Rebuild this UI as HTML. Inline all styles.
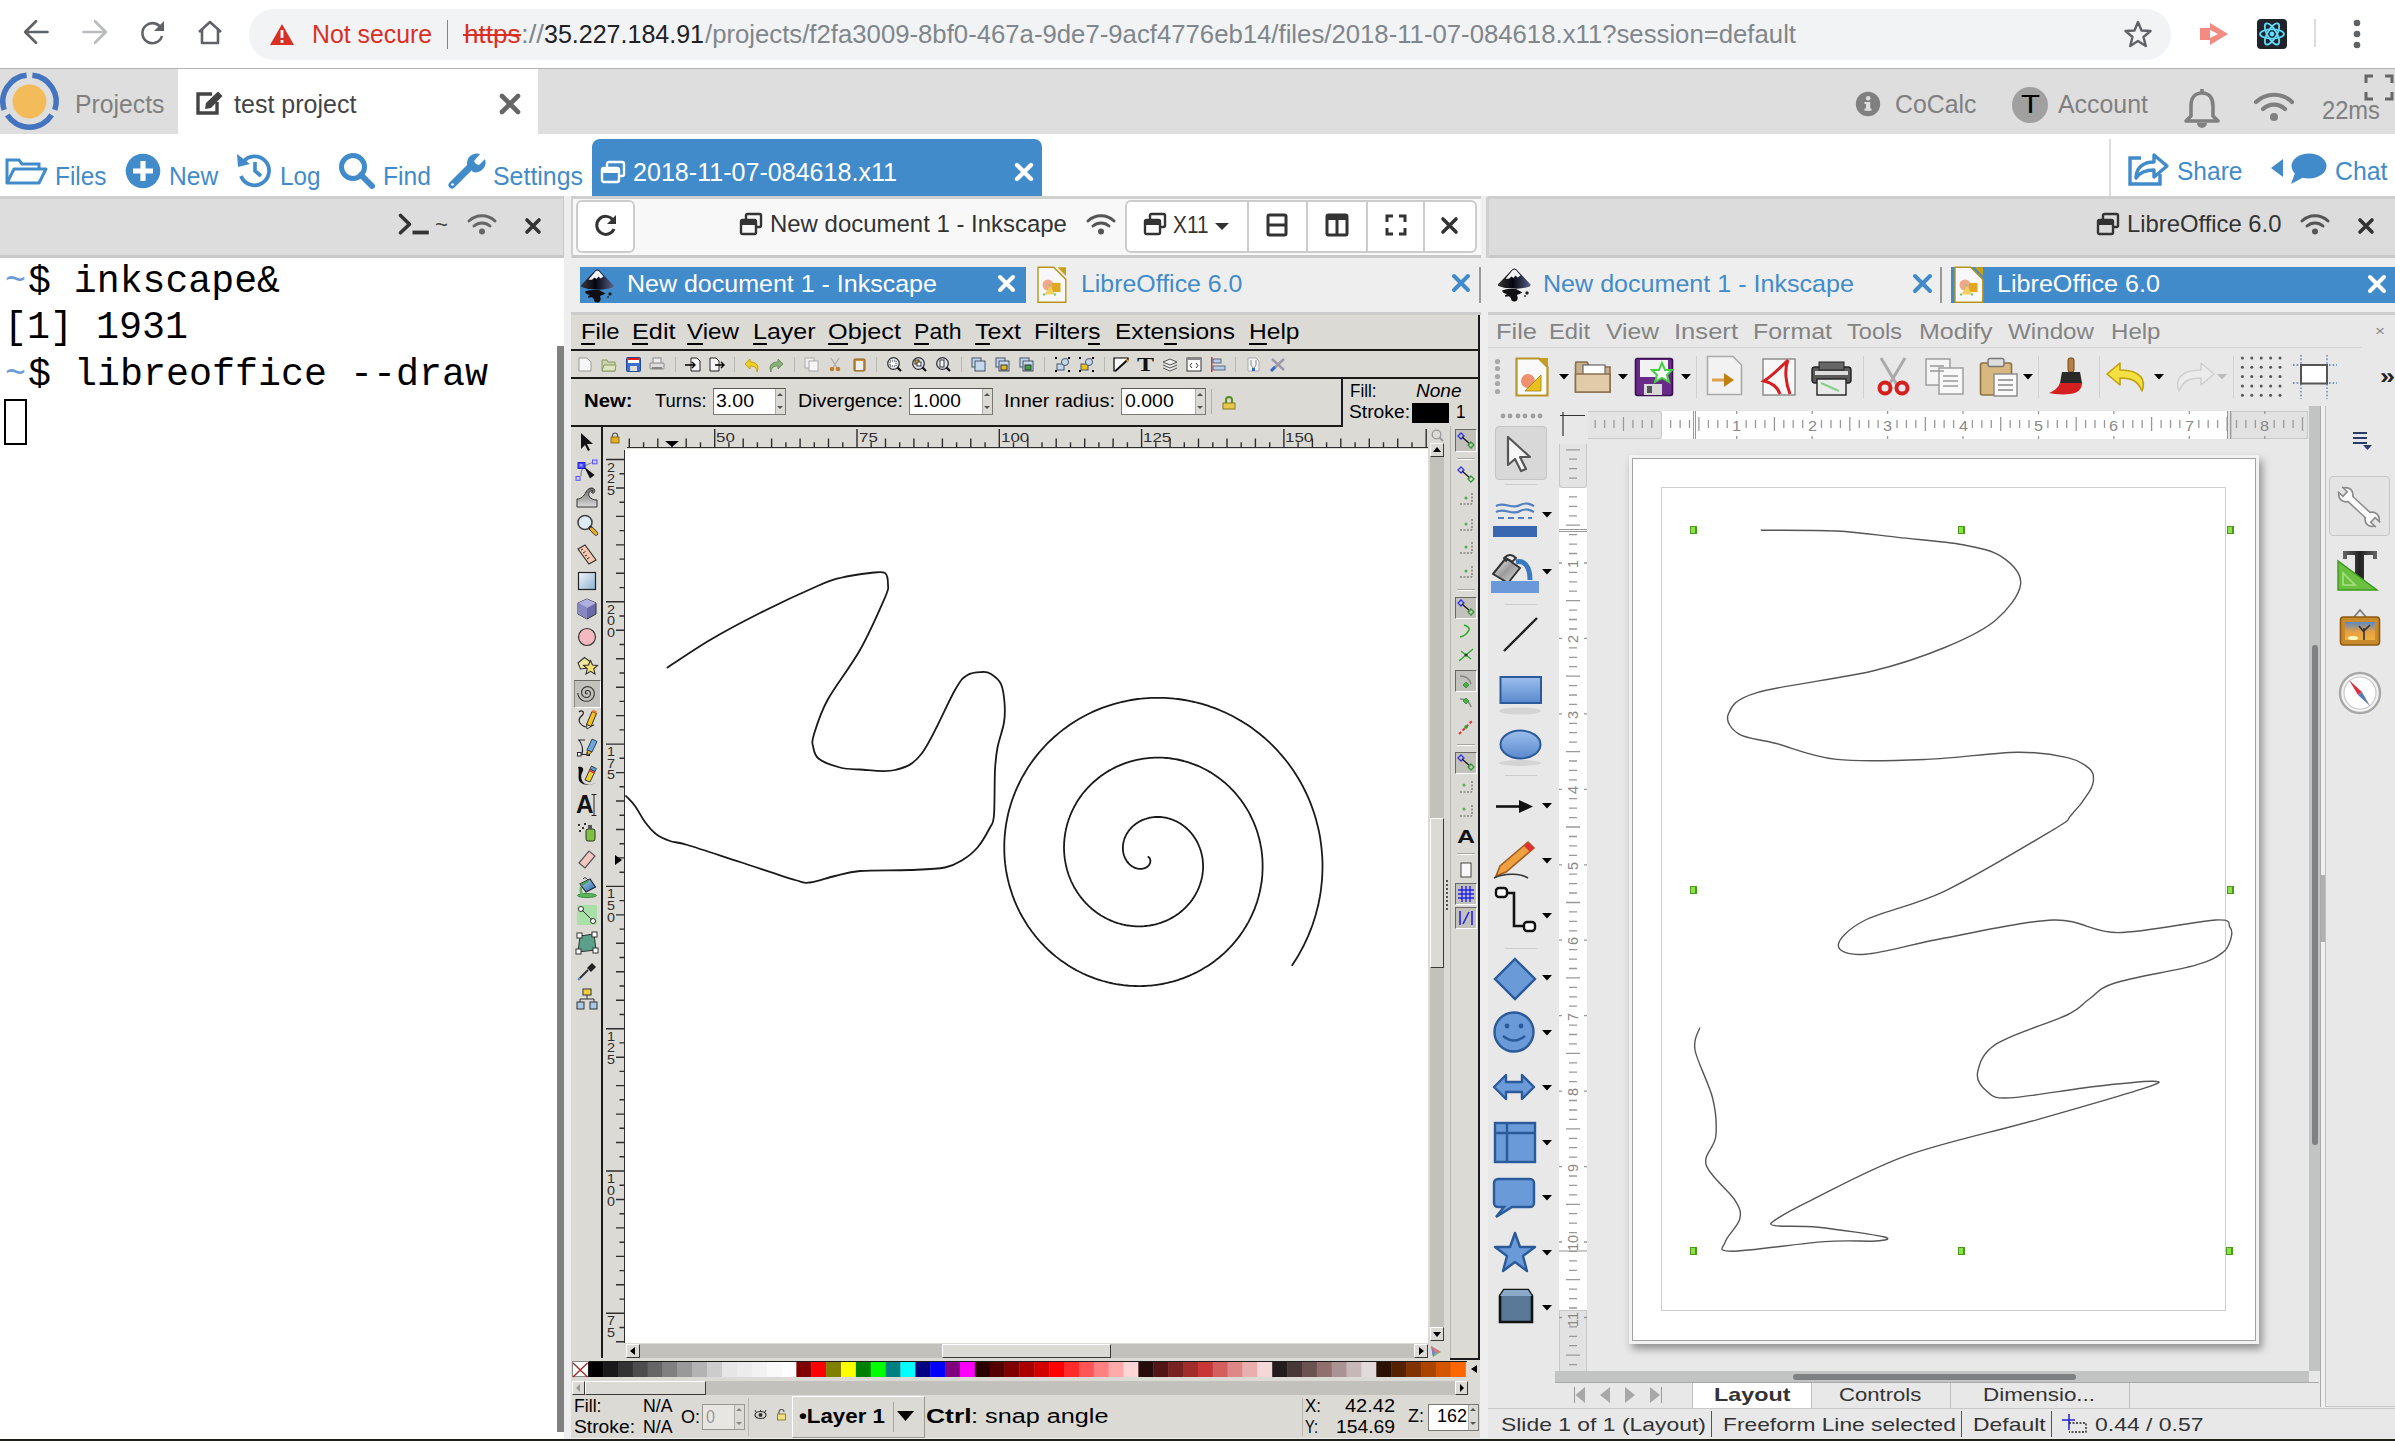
<!DOCTYPE html>
<html><head><meta charset="utf-8">
<style>
html,body{margin:0;padding:0;}
body{width:2395px;height:1441px;position:relative;overflow:hidden;background:#fff;font-family:"Liberation Sans",sans-serif;}
.a{position:absolute;box-sizing:border-box;}
.t{position:absolute;white-space:nowrap;line-height:1;}
svg.a{overflow:visible;}
</style></head><body>
<div class="a" style="left:0px;top:0px;width:2395px;height:68px;background:#fff;"></div>
<div class="a" style="left:0px;top:68px;width:2395px;height:1px;background:#b4b4b4;"></div>
<svg class="a" style="left:24px;top:20px;" width="26" height="26" viewBox="0 0 26 26"><path d="M23.5 12H1.5M12 1.2L1.2 12L12 22.8" fill="none" stroke="#5f6368" stroke-width="2.7" stroke-linecap="round" stroke-linejoin="round"/></svg>
<svg class="a" style="left:82px;top:20px;" width="26" height="26" viewBox="0 0 26 26"><path d="M1.5 12H23.5M13 1.2L23.8 12L13 22.8" fill="none" stroke="#b9bcbf" stroke-width="2.7" stroke-linecap="round" stroke-linejoin="round"/></svg>
<svg class="a" style="left:139px;top:20px;" width="28" height="26" viewBox="0 0 28 26"><path d="M22.5 9A10 10 0 1 0 23 16" fill="none" stroke="#5f6368" stroke-width="2.6"/><path d="M25 1V11H15Z" fill="#5f6368"/></svg>
<svg class="a" style="left:196px;top:20px;" width="28" height="26" viewBox="0 0 28 26"><path d="M3 12L14 2L25 12M6 10V23H22V10" fill="none" stroke="#5f6368" stroke-width="2.6" stroke-linejoin="round"/></svg>
<div class="a" style="left:249px;top:9px;width:1922px;height:51px;background:#f1f3f4;border-radius:25px;"></div>
<svg class="a" style="left:270px;top:24px;" width="24" height="21" viewBox="0 0 24 21"><path d="M12 0L24 21H0Z" fill="#d93025"/><rect x="10.6" y="6" width="2.8" height="8" fill="#fff"/><rect x="10.6" y="16" width="2.8" height="2.8" fill="#fff"/></svg>
<div class="t" style="left:312.0px;top:21.91px;font-size:25.50px;color:#d93025;transform:scaleX(0.9732);transform-origin:0 0;">Not secure</div>
<div class="a" style="left:446.5px;top:20px;width:1px;height:29px;background:#80868b;"></div>
<div class="t" style="left:464.0px;top:21.91px;font-size:25.50px;color:#d93025;transform:scaleX(1.0220);transform-origin:0 0;">https</div>
<div class="a" style="left:463px;top:34px;width:58px;height:2px;background:#d93025;"></div>
<div class="t" style="left:520.5px;top:21.91px;font-size:25.50px;color:#80868b;transform:scaleX(1.0822);transform-origin:0 0;">://</div>
<div class="t" style="left:544.0px;top:21.91px;font-size:25.50px;color:#202124;transform:scaleX(0.9811);transform-origin:0 0;">35.227.184.91</div>
<div class="t" style="left:705.0px;top:21.91px;font-size:25.50px;color:#80868b;transform:scaleX(1.0088);transform-origin:0 0;">/projects/f2fa3009-8bf0-467a-9de7-9acf4776eb14/files/2018-11-07-084618.x11?session=default</div>
<svg class="a" style="left:2124px;top:20px;" width="28" height="28" viewBox="0 0 28 28"><path d="M14 2L17.5 10.5L26.5 11L19.5 17L21.8 26L14 21L6.2 26L8.5 17L1.5 11L10.5 10.5Z" fill="none" stroke="#5f6368" stroke-width="2.4" stroke-linejoin="round"/></svg>
<svg class="a" style="left:2198px;top:20px;" width="32" height="28" viewBox="0 0 32 28"><path d="M2 8H12V3L30 14L12 25V20H2Z" fill="#f28b82"/><path d="M12 10L20 14L12 18Z" fill="#fff"/></svg>
<div class="a" style="left:2257px;top:19px;width:30px;height:30px;background:#20232a;border-radius:4px;"></div>
<svg class="a" style="left:2257px;top:19px;" width="30" height="30" viewBox="0 0 30 30"><g fill="none" stroke="#61dafb" stroke-width="1.8"><ellipse cx="15" cy="15" rx="12" ry="4.6"/><ellipse cx="15" cy="15" rx="12" ry="4.6" transform="rotate(60 15 15)"/><ellipse cx="15" cy="15" rx="12" ry="4.6" transform="rotate(120 15 15)"/></g><circle cx="15" cy="15" r="2.4" fill="#61dafb"/></svg>
<div class="a" style="left:2314px;top:19px;width:2px;height:28px;background:#dadce0;"></div>
<svg class="a" style="left:2350px;top:19px;" width="14" height="32" viewBox="0 0 14 32"><circle cx="7" cy="4" r="3.3" fill="#5f6368"/><circle cx="7" cy="15" r="3.3" fill="#5f6368"/><circle cx="7" cy="26" r="3.3" fill="#5f6368"/></svg>
<div class="a" style="left:0px;top:69px;width:2395px;height:65px;background:#dedede;"></div>
<div class="a" style="left:178px;top:69px;width:360px;height:65px;background:#fff;"></div>
<svg class="a" style="left:0px;top:72px;" width="60" height="60" viewBox="0 0 60 60"><circle cx="29.5" cy="29.5" r="17" fill="#f4bb5a"/><g fill="none" stroke="#4474c0" stroke-width="5.5"><path d="M26.6 3.2A26.5 26.5 0 0 0 4.2 37.9"/><path d="M32.4 3.2A26.5 26.5 0 0 1 54.8 37.9"/><path d="M7.3 43.1A26.5 26.5 0 0 0 51.7 43.1"/></g></svg>
<div class="t" style="left:75.0px;top:91.84px;font-size:25.70px;color:#808080;transform:scaleX(0.9640);transform-origin:0 0;">Projects</div>
<svg class="a" style="left:195px;top:90px;" width="30" height="26" viewBox="0 0 30 26"><path d="M17 4H3V23H22V12" fill="none" stroke="#444" stroke-width="3.4"/><path d="M10 19L11 13L23 1.5L27.5 6L16 18Z" fill="#444"/></svg>
<div class="t" style="left:234.0px;top:91.84px;font-size:25.70px;color:#444;transform:scaleX(0.9745);transform-origin:0 0;">test project</div>
<svg class="a" style="left:499px;top:94px;" width="22" height="20" viewBox="0 0 22 20"><path d="M3 2L19 18M19 2L3 18" stroke="#666" stroke-width="4.6" stroke-linecap="round"/></svg>
<svg class="a" style="left:1855px;top:91px;" width="26" height="26" viewBox="0 0 26 26"><circle cx="13" cy="13" r="12.2" fill="#808080"/><rect x="11" y="11" width="4.2" height="8.5" fill="#dedede"/><rect x="9.5" y="17.5" width="7" height="2.2" fill="#dedede"/><rect x="9.5" y="11" width="3" height="2" fill="#dedede"/><circle cx="13.2" cy="7.2" r="2.3" fill="#dedede"/></svg>
<div class="t" style="left:1894.5px;top:91.74px;font-size:25.70px;color:#808080;transform:scaleX(0.9672);transform-origin:0 0;">CoCalc</div>
<svg class="a" style="left:2012px;top:87px;" width="36" height="36" viewBox="0 0 36 36"><circle cx="18" cy="18" r="18" fill="#a0a0a0"/></svg>
<div class="t" style="left:2020.5px;top:92.34px;font-size:25.00px;color:#000;transform:scaleX(1.2441);transform-origin:0 0;">T</div>
<div class="t" style="left:2058.0px;top:91.74px;font-size:25.70px;color:#808080;transform:scaleX(0.9692);transform-origin:0 0;">Account</div>
<svg class="a" style="left:2182px;top:86px;" width="40" height="43" viewBox="0 0 40 43"><path d="M20 3V7M20 7C12 7 9 13 9 20V30L4 35H36L31 30V20C31 13 28 7 20 7Z" fill="none" stroke="#808080" stroke-width="3.6" stroke-linejoin="round"/><path d="M15 37A5 5 0 0 0 25 37Z" fill="#808080"/></svg>
<svg class="a" style="left:2253px;top:92px;" width="42" height="30" viewBox="0 0 42 30"><path d="M3 10A26 26 0 0 1 39 10M10 17A16 16 0 0 1 32 17" fill="none" stroke="#808080" stroke-width="4.2" stroke-linecap="round"/><circle cx="21" cy="25" r="4" fill="#808080"/></svg>
<div class="t" style="left:2322.0px;top:98.17px;font-size:25.20px;color:#808080;transform:scaleX(0.9412);transform-origin:0 0;">22ms</div>
<svg class="a" style="left:2364px;top:74px;" width="30" height="27" viewBox="0 0 30 27"><path d="M2 9V2H9M21 2H28V9M28 18V25H21M9 25H2V18" fill="none" stroke="#666" stroke-width="3"/></svg>
<div class="a" style="left:0px;top:134px;width:2395px;height:62px;background:#fff;"></div>
<svg class="a" style="left:5px;top:156px;" width="42" height="29" viewBox="0 0 42 29"><path d="M2 27V4H14L17 8H34V12" fill="none" stroke="#428bca" stroke-width="3"/><path d="M2 27L9 13H41L34 27Z" fill="none" stroke="#428bca" stroke-width="3" stroke-linejoin="round"/></svg>
<div class="t" style="left:54.5px;top:163.98px;font-size:25.30px;color:#428bca;transform:scaleX(0.9641);transform-origin:0 0;">Files</div>
<svg class="a" style="left:125px;top:153px;" width="36" height="36" viewBox="0 0 36 36"><circle cx="18" cy="18" r="17.3" fill="#428bca"/><path d="M18 8V28M8 18H28" stroke="#fff" stroke-width="5.2"/></svg>
<div class="t" style="left:168.7px;top:163.98px;font-size:25.30px;color:#428bca;transform:scaleX(0.9740);transform-origin:0 0;">New</div>
<svg class="a" style="left:235px;top:152px;" width="38" height="37" viewBox="0 0 38 37"><path d="M8 10A14.5 14.5 0 1 1 6 24" fill="none" stroke="#428bca" stroke-width="3.8"/><path d="M2 2L3 15L15 12Z" fill="#428bca"/><path d="M20 10V19L26 24" fill="none" stroke="#428bca" stroke-width="3.6"/></svg>
<div class="t" style="left:280.0px;top:163.98px;font-size:25.30px;color:#428bca;transform:scaleX(0.9594);transform-origin:0 0;">Log</div>
<svg class="a" style="left:338px;top:152px;" width="38" height="38" viewBox="0 0 38 38"><circle cx="15" cy="15" r="11.5" fill="none" stroke="#428bca" stroke-width="5"/><path d="M23 23L34 34" stroke="#428bca" stroke-width="6" stroke-linecap="round"/></svg>
<div class="t" style="left:382.5px;top:163.98px;font-size:25.30px;color:#428bca;transform:scaleX(0.9752);transform-origin:0 0;">Find</div>
<svg class="a" style="left:447px;top:152px;" width="40" height="38" viewBox="0 0 40 38"><path d="M5 33L22 16" stroke="#428bca" stroke-width="7" stroke-linecap="round"/><path d="M20 13A10 10 0 0 1 33 2L27 9L29 12L32 13L38 7A10 10 0 0 1 26 20Z" fill="#428bca"/><circle cx="5.5" cy="32.5" r="1.3" fill="#fff"/></svg>
<div class="t" style="left:492.5px;top:163.98px;font-size:25.30px;color:#428bca;transform:scaleX(0.9845);transform-origin:0 0;">Settings</div>
<div class="a" style="left:592px;top:139px;width:450px;height:58px;background:#428bca;border-radius:8px 8px 0 0;"></div>
<svg class="a" style="left:600px;top:160px;" width="26" height="24" viewBox="0 0 26 24"><rect x="7" y="2" width="17" height="14" rx="2" fill="none" stroke="#fff" stroke-width="2.4"/><rect x="2" y="8" width="17" height="14" rx="2" fill="#428bca" stroke="#fff" stroke-width="2.4"/><rect x="2" y="8" width="17" height="5" fill="#fff"/></svg>
<div class="t" style="left:632.5px;top:159.58px;font-size:25.30px;color:#fff;transform:scaleX(0.9912);transform-origin:0 0;">2018-11-07-084618.x11</div>
<svg class="a" style="left:1014px;top:162px;" width="20" height="20" viewBox="0 0 20 20"><path d="M3 3L17 17M17 3L3 17" stroke="#fff" stroke-width="4.4" stroke-linecap="round"/></svg>
<div class="a" style="left:2109px;top:139px;width:2px;height:57px;background:#ddd;"></div>
<svg class="a" style="left:2127px;top:150px;" width="42" height="36" viewBox="0 0 42 36"><path d="M14 8H3V34H33V24" fill="none" stroke="#428bca" stroke-width="3.4"/><path d="M9 28C9 17 17 12 27 12V5L40 16L27 27V20C19 20 13 22 9 28Z" fill="none" stroke="#428bca" stroke-width="3.4" stroke-linejoin="round"/></svg>
<div class="t" style="left:2177.0px;top:159.08px;font-size:25.30px;color:#428bca;transform:scaleX(0.9701);transform-origin:0 0;">Share</div>
<svg class="a" style="left:2270px;top:158px;" width="14" height="20" viewBox="0 0 14 20"><path d="M13 1V19L1 10Z" fill="#428bca"/></svg>
<svg class="a" style="left:2290px;top:153px;" width="38" height="32" viewBox="0 0 38 32"><ellipse cx="19" cy="13" rx="17.5" ry="12.5" fill="#428bca"/><path d="M5 20L1 31L14 24Z" fill="#428bca"/></svg>
<div class="t" style="left:2335.0px;top:159.08px;font-size:25.30px;color:#428bca;transform:scaleX(0.9824);transform-origin:0 0;">Chat</div>
<div class="a" style="left:0px;top:196px;width:2395px;height:1245px;background:#eeeeee;"></div>
<div class="a" style="left:0px;top:196px;width:564px;height:3px;background:#cfcfcf;"></div>
<div class="a" style="left:571px;top:196px;width:910px;height:3px;background:#cfcfcf;"></div>
<div class="a" style="left:1488px;top:196px;width:907px;height:3px;background:#cfcfcf;"></div>
<div class="a" style="left:0px;top:199px;width:564px;height:57px;background:#dddddd;"></div>
<div class="a" style="left:0px;top:255px;width:564px;height:3px;background:#c8c8c8;"></div>
<div class="a" style="left:562.5px;top:196px;width:1.5px;height:62px;background:#c8c8c8;"></div>
<div class="a" style="left:0px;top:258px;width:564px;height:1183px;background:#fff;"></div>
<svg class="a" style="left:398px;top:213px;" width="32" height="23" viewBox="0 0 32 23"><path d="M2.5 2.5L11.5 11.2L2.5 19.8" fill="none" stroke="#333" stroke-width="3.6" stroke-linecap="round" stroke-linejoin="round"/><rect x="14.5" y="17.6" width="16.3" height="3.8" fill="#333"/></svg>
<div class="t" style="left:435.0px;top:214.38px;font-size:22.00px;color:#444;transform:scaleX(1.0119);transform-origin:0 0;">~</div>
<svg class="a" style="left:467px;top:213px;" width="30" height="22" viewBox="0 0 30 22"><g transform="scale(1)"><path d="M2 8A19 19 0 0 1 28 8M7 13A12 12 0 0 1 23 13" fill="none" stroke="#666" stroke-width="3" stroke-linecap="round"/><circle cx="15" cy="18.5" r="3" fill="#666"/></g></svg>
<svg class="a" style="left:525px;top:218px;" width="16" height="16" viewBox="0 0 16 16"><path d="M2 2L14 14M14 2L2 14" stroke="#333" stroke-width="3.6" stroke-linecap="round"/></svg>
<div class="t" style="left:5.0px;top:262.61px;font-size:39.00px;color:#6b9ad9;font-family:'Liberation Mono', monospace;transform:scaleX(0.8973);transform-origin:0 0;">~</div>
<div class="t" style="left:28.0px;top:262.61px;font-size:39.00px;color:#000;font-family:'Liberation Mono', monospace;transform:scaleX(0.9789);transform-origin:0 0;">$ inkscape&amp;</div>
<div class="t" style="left:4.0px;top:309.11px;font-size:39.00px;color:#000;font-family:'Liberation Mono', monospace;transform:scaleX(0.9828);transform-origin:0 0;">[1] 1931</div>
<div class="t" style="left:5.0px;top:356.11px;font-size:39.00px;color:#6b9ad9;font-family:'Liberation Mono', monospace;transform:scaleX(0.8973);transform-origin:0 0;">~</div>
<div class="t" style="left:28.0px;top:356.11px;font-size:39.00px;color:#000;font-family:'Liberation Mono', monospace;transform:scaleX(0.9828);transform-origin:0 0;">$ libreoffice --draw</div>
<div class="a" style="left:4px;top:399px;width:23px;height:46px;border:2px solid #000;"></div>
<div class="a" style="left:557px;top:346px;width:7px;height:1086px;background:#808080;"></div>
<div class="a" style="left:571px;top:199px;width:910px;height:57px;background:#f8f8f8;"></div>
<div class="a" style="left:571px;top:255px;width:910px;height:3px;background:#c8c8c8;"></div>
<div class="a" style="left:571px;top:197px;width:2px;height:61px;background:#d0d0d0;"></div>
<div class="a" style="left:576px;top:200px;width:59px;height:53px;background:#fff;border:2px solid #ccc;border-radius:6px;"></div>
<svg class="a" style="left:594px;top:213px;" width="24" height="24" viewBox="0 0 24 24"><path d="M19 7A9 9 0 1 0 20 16" fill="none" stroke="#333" stroke-width="3"/><path d="M22 2V11H13Z" fill="#333"/></svg>
<svg class="a" style="left:739px;top:212px;" width="24" height="24" viewBox="0 0 24 24"><rect x="7" y="2" width="15" height="13" rx="1.5" fill="none" stroke="#333" stroke-width="2.4"/><rect x="2" y="8" width="15" height="14" rx="1.5" fill="#f8f8f8" stroke="#333" stroke-width="2.4"/><rect x="2" y="8" width="15" height="5" fill="#333"/></svg>
<div class="t" style="left:770.0px;top:212.23px;font-size:24.30px;color:#333;transform:scaleX(0.9860);transform-origin:0 0;">New document 1 - Inkscape</div>
<svg class="a" style="left:1086px;top:213px;" width="30" height="22" viewBox="0 0 30 22"><g transform="scale(1)"><path d="M2 8A19 19 0 0 1 28 8M7 13A12 12 0 0 1 23 13" fill="none" stroke="#555" stroke-width="3" stroke-linecap="round"/><circle cx="15" cy="18.5" r="3" fill="#555"/></g></svg>
<div class="a" style="left:1125px;top:200px;width:352px;height:53px;background:#fff;border:2px solid #ccc;border-radius:6px;"></div>
<div class="a" style="left:1247px;top:201px;width:2px;height:51px;background:#ccc;"></div>
<div class="a" style="left:1306px;top:201px;width:2px;height:51px;background:#ccc;"></div>
<div class="a" style="left:1366px;top:201px;width:2px;height:51px;background:#ccc;"></div>
<div class="a" style="left:1423px;top:201px;width:2px;height:51px;background:#ccc;"></div>
<svg class="a" style="left:1143px;top:212px;" width="24" height="24" viewBox="0 0 24 24"><rect x="7" y="2" width="15" height="13" rx="1.5" fill="none" stroke="#333" stroke-width="2.4"/><rect x="2" y="8" width="15" height="14" rx="1.5" fill="#fff" stroke="#333" stroke-width="2.4"/><rect x="2" y="8" width="15" height="5" fill="#333"/></svg>
<div class="t" style="left:1172.5px;top:213.43px;font-size:24.30px;color:#333;transform:scaleX(0.8568);transform-origin:0 0;">X11</div>
<svg class="a" style="left:1214px;top:222px;" width="16" height="9" viewBox="0 0 16 9"><path d="M1 1H15L8 8Z" fill="#333"/></svg>
<svg class="a" style="left:1266px;top:213px;" width="22" height="24" viewBox="0 0 22 24"><rect x="2" y="2" width="18" height="20" rx="1.5" fill="none" stroke="#333" stroke-width="3"/><rect x="2" y="10.5" width="18" height="3" fill="#333"/></svg>
<svg class="a" style="left:1325px;top:213px;" width="24" height="24" viewBox="0 0 24 24"><rect x="2" y="2" width="20" height="20" rx="1.5" fill="none" stroke="#333" stroke-width="3"/><rect x="2" y="2" width="20" height="5" fill="#333"/><rect x="10.5" y="2" width="3" height="20" fill="#333"/></svg>
<svg class="a" style="left:1385px;top:214px;" width="22" height="22" viewBox="0 0 22 22"><path d="M2 8V2H8M14 2H20V8M20 14V20H14M8 20H2V14" fill="none" stroke="#333" stroke-width="3"/></svg>
<svg class="a" style="left:1441px;top:217px;" width="17" height="17" viewBox="0 0 17 17"><path d="M2 2L15 15M15 2L2 15" stroke="#333" stroke-width="3.6" stroke-linecap="round"/></svg>
<div class="a" style="left:1488px;top:199px;width:907px;height:57px;background:#dcdcdc;"></div>
<div class="a" style="left:1488px;top:255px;width:907px;height:3px;background:#c8c8c8;"></div>
<div class="a" style="left:1486px;top:197px;width:3px;height:61px;background:#d0d0d0;"></div>
<svg class="a" style="left:2096px;top:212px;" width="24" height="24" viewBox="0 0 24 24"><rect x="7" y="2" width="15" height="13" rx="1.5" fill="none" stroke="#333" stroke-width="2.4"/><rect x="2" y="8" width="15" height="14" rx="1.5" fill="#dcdcdc" stroke="#333" stroke-width="2.4"/><rect x="2" y="8" width="15" height="5" fill="#333"/></svg>
<div class="t" style="left:2127.0px;top:211.83px;font-size:24.30px;color:#333;transform:scaleX(0.9803);transform-origin:0 0;">LibreOffice 6.0</div>
<svg class="a" style="left:2300px;top:213px;" width="30" height="22" viewBox="0 0 30 22"><g transform="scale(1)"><path d="M2 8A19 19 0 0 1 28 8M7 13A12 12 0 0 1 23 13" fill="none" stroke="#555" stroke-width="3" stroke-linecap="round"/><circle cx="15" cy="18.5" r="3" fill="#555"/></g></svg>
<svg class="a" style="left:2358px;top:218px;" width="16" height="16" viewBox="0 0 16 16"><path d="M2 2L14 14M14 2L2 14" stroke="#333" stroke-width="3.6" stroke-linecap="round"/></svg>
<div class="a" style="left:571px;top:258px;width:910px;height:55px;background:#eeeeee;"></div>
<div class="a" style="left:580px;top:267px;width:446px;height:36px;background:#428bca;"></div>
<svg class="a" style="left:573px;top:261px;" width="50" height="50" viewBox="0 0 50 50"><defs><linearGradient id="ikg573" x1="0" x2="1"><stop offset="0" stop-color="#3a3a3a"/><stop offset="0.45" stop-color="#05050f"/><stop offset="1" stop-color="#5a6288"/></linearGradient></defs><path d="M8 24.3L22.5 9.2Q24.3 7.6 26.2 9.2L40.6 24.5Q40.8 26.5 36 27.5Q30 29 24 28.5Q14 28.5 8.5 26Q7.5 25.2 8 24.3Z" fill="url(#ikg573)"/><path d="M15.5 18.8L22.5 10.2Q24.3 8.8 26 10.2L30.5 15.5L27.5 17.5L25.5 15.5L23.5 18L21.5 16.5L19 18.8Z" fill="#f4f4f8"/><path d="M12 30.5Q17 28.2 26 29L32.5 32.5Q29 34.2 27 35Q28.5 38 27 40.5Q24 42.5 21.5 40.5Q21.5 37.5 19 36.2L15.5 36.8Q14 35.5 17 34Q12.5 33 12 30.5Z" fill="#101014"/><circle cx="37" cy="33" r="1.7" fill="#222"/><circle cx="35" cy="36" r="0.9" fill="#222"/></svg>
<div class="t" style="left:626.5px;top:271.65px;font-size:24.40px;color:#fff;transform:scaleX(1.0250);transform-origin:0 0;">New document 1 - Inkscape</div>
<svg class="a" style="left:998px;top:275px;" width="17" height="17" viewBox="0 0 17 17"><path d="M2 2L15 15M15 2L2 15" stroke="#fff" stroke-width="4" stroke-linecap="round"/></svg>
<svg class="a" style="left:1028px;top:260px;" width="50" height="50" viewBox="0 0 50 50"><path d="M10 7.3H25.7L37.8 19.4V42.3H10Z" fill="#f8f8fa" stroke="#b8951a" stroke-width="1.4"/><path d="M29.5 7.3H38V16Z" fill="#c9a010"/><circle cx="20" cy="25" r="5.5" fill="#f0a888"/><rect x="24" y="23" width="8.5" height="9" fill="#e0a820"/><path d="M16.5 34.5L22 25.5L27 34.5Z" fill="#f2d060"/><circle cx="16" cy="34.5" r="1.2" fill="#7c7"/><circle cx="27" cy="34.5" r="1.2" fill="#7c7"/><circle cx="21.5" cy="25.5" r="1" fill="#7c7"/></svg>
<div class="t" style="left:1081.0px;top:271.65px;font-size:24.40px;color:#428bca;transform:scaleX(1.0206);transform-origin:0 0;">LibreOffice 6.0</div>
<svg class="a" style="left:1452px;top:274px;" width="18" height="18" viewBox="0 0 18 18"><path d="M2 2L16 16M16 2L2 16" stroke="#428bca" stroke-width="4" stroke-linecap="round"/></svg>
<div class="a" style="left:1479px;top:267px;width:2px;height:36px;background:#999;"></div>
<div class="a" style="left:1488px;top:258px;width:907px;height:55px;background:#eeeeee;"></div>
<svg class="a" style="left:1490px;top:260px;" width="50" height="50" viewBox="0 0 50 50"><defs><linearGradient id="ikg1490" x1="0" x2="1"><stop offset="0" stop-color="#3a3a3a"/><stop offset="0.45" stop-color="#05050f"/><stop offset="1" stop-color="#5a6288"/></linearGradient></defs><path d="M8 24.3L22.5 9.2Q24.3 7.6 26.2 9.2L40.6 24.5Q40.8 26.5 36 27.5Q30 29 24 28.5Q14 28.5 8.5 26Q7.5 25.2 8 24.3Z" fill="url(#ikg1490)"/><path d="M15.5 18.8L22.5 10.2Q24.3 8.8 26 10.2L30.5 15.5L27.5 17.5L25.5 15.5L23.5 18L21.5 16.5L19 18.8Z" fill="#f4f4f8"/><path d="M12 30.5Q17 28.2 26 29L32.5 32.5Q29 34.2 27 35Q28.5 38 27 40.5Q24 42.5 21.5 40.5Q21.5 37.5 19 36.2L15.5 36.8Q14 35.5 17 34Q12.5 33 12 30.5Z" fill="#101014"/><circle cx="37" cy="33" r="1.7" fill="#222"/><circle cx="35" cy="36" r="0.9" fill="#222"/></svg>
<div class="t" style="left:1542.5px;top:271.65px;font-size:24.40px;color:#428bca;transform:scaleX(1.0283);transform-origin:0 0;">New document 1 - Inkscape</div>
<svg class="a" style="left:1913px;top:274px;" width="19" height="19" viewBox="0 0 19 19"><path d="M2 2L17 17M17 2L2 17" stroke="#428bca" stroke-width="4" stroke-linecap="round"/></svg>
<div class="a" style="left:1940px;top:267px;width:2px;height:36px;background:#999;"></div>
<div class="a" style="left:1951px;top:267px;width:444px;height:36px;background:#428bca;"></div>
<svg class="a" style="left:1945px;top:260px;" width="50" height="50" viewBox="0 0 50 50"><path d="M10 7.3H25.7L37.8 19.4V42.3H10Z" fill="#f8f8fa" stroke="#b8951a" stroke-width="1.4"/><path d="M29.5 7.3H38V16Z" fill="#c9a010"/><circle cx="20" cy="25" r="5.5" fill="#f0a888"/><rect x="24" y="23" width="8.5" height="9" fill="#e0a820"/><path d="M16.5 34.5L22 25.5L27 34.5Z" fill="#f2d060"/><circle cx="16" cy="34.5" r="1.2" fill="#7c7"/><circle cx="27" cy="34.5" r="1.2" fill="#7c7"/><circle cx="21.5" cy="25.5" r="1" fill="#7c7"/></svg>
<div class="t" style="left:1996.5px;top:271.65px;font-size:24.40px;color:#fff;transform:scaleX(1.0300);transform-origin:0 0;">LibreOffice 6.0</div>
<svg class="a" style="left:2368px;top:275px;" width="18" height="18" viewBox="0 0 18 18"><path d="M2 2L16 16M16 2L2 16" stroke="#fff" stroke-width="4" stroke-linecap="round"/></svg>
<div class="a" style="left:571px;top:312px;width:910px;height:3px;background:#cccccc;"></div>
<div class="a" style="left:571px;top:315px;width:909px;height:1123px;background:#dcdad5;"></div>
<div class="a" style="left:1478px;top:315px;width:2px;height:1045px;background:#1a1a1a;"></div>
<div class="t" style="left:580.5px;top:321.45px;font-size:22.50px;color:#000;transform:scaleX(1.0619);transform-origin:0 0;">File</div>
<div class="a" style="left:580.5px;top:343.2px;width:14.5948px;height:1.4px;background:#000;"></div>
<div class="t" style="left:631.5px;top:321.45px;font-size:22.50px;color:#000;transform:scaleX(1.1219);transform-origin:0 0;">Edit</div>
<div class="a" style="left:631.5px;top:343.2px;width:16.8383px;height:1.4px;background:#000;"></div>
<div class="t" style="left:687.0px;top:321.45px;font-size:22.50px;color:#000;transform:scaleX(1.0752);transform-origin:0 0;">View</div>
<div class="a" style="left:687px;top:343.2px;width:16.1364px;height:1.4px;background:#000;"></div>
<div class="t" style="left:753.0px;top:321.45px;font-size:22.50px;color:#000;transform:scaleX(1.1104);transform-origin:0 0;">Layer</div>
<div class="a" style="left:753px;top:343.2px;width:13.8956px;height:1.4px;background:#000;"></div>
<div class="t" style="left:828.0px;top:321.45px;font-size:22.50px;color:#000;transform:scaleX(1.1226);transform-origin:0 0;">Object</div>
<div class="a" style="left:828px;top:343.2px;width:19.6461px;height:1.4px;background:#000;"></div>
<div class="t" style="left:913.5px;top:321.45px;font-size:22.50px;color:#000;transform:scaleX(1.0262);transform-origin:0 0;">Path</div>
<div class="a" style="left:913.5px;top:343.2px;width:15.4016px;height:1.4px;background:#000;"></div>
<div class="t" style="left:975.0px;top:321.45px;font-size:22.50px;color:#000;transform:scaleX(1.1148);transform-origin:0 0;">Text</div>
<div class="a" style="left:975px;top:343.2px;width:15.3216px;height:1.4px;background:#000;"></div>
<div class="t" style="left:1033.5px;top:321.45px;font-size:22.50px;color:#000;transform:scaleX(1.0857);transform-origin:0 0;">Filters</div>
<div class="a" style="left:1087.79px;top:343.2px;width:12.2141px;height:1.4px;background:#000;"></div>
<div class="t" style="left:1114.5px;top:321.45px;font-size:22.50px;color:#000;transform:scaleX(1.0903);transform-origin:0 0;">Extensions</div>
<div class="a" style="left:1163.59px;top:343.2px;width:13.6436px;height:1.4px;background:#000;"></div>
<div class="t" style="left:1249.0px;top:321.45px;font-size:22.50px;color:#000;transform:scaleX(1.0913);transform-origin:0 0;">Help</div>
<div class="a" style="left:1249px;top:343.2px;width:17.7324px;height:1.4px;background:#000;"></div>
<div class="a" style="left:571px;top:349px;width:908px;height:2px;background:#1a1a1a;"></div>
<div class="a" style="left:571px;top:377px;width:908px;height:2px;background:#1a1a1a;"></div>
<svg class="a" style="left:578px;top:357px;" width="14" height="15" viewBox="0 0 14 15"><path d="M1 1H9L13 5V14H1Z" fill="#f6f6f6" stroke="#999" stroke-width="1"/></svg>
<svg class="a" style="left:601px;top:358px;" width="16" height="14" viewBox="0 0 16 14"><path d="M1 2H6L7 4H14V13H1Z" fill="#c9d1a8" stroke="#8a9a60" stroke-width="1"/><path d="M1 13L3 7H15L14 13Z" fill="#dde4bf" stroke="#8a9a60" stroke-width="1"/></svg>
<svg class="a" style="left:626px;top:357px;" width="15" height="15" viewBox="0 0 15 15"><rect x="0.5" y="0.5" width="14" height="14" rx="1" fill="#3a6ed0" stroke="#234a90"/><rect x="2" y="1" width="11" height="5" fill="#fff"/><rect x="2" y="1" width="11" height="2" fill="#e02020"/><rect x="4" y="9" width="7" height="5" fill="#ddd"/></svg>
<svg class="a" style="left:649px;top:357px;" width="16" height="15" viewBox="0 0 16 15"><rect x="4" y="1" width="8" height="6" fill="#eee" stroke="#888"/><rect x="1" y="6" width="14" height="6" rx="1" fill="#ddd" stroke="#888"/><rect x="3" y="10" width="10" height="2" fill="#888"/></svg>
<div class="a" style="left:675px;top:357px;width:1px;height:15px;background:#b8b6b0;"></div>
<svg class="a" style="left:685px;top:357px;" width="16" height="15" viewBox="0 0 16 15"><path d="M6 1H12L15 4V14H6Z" fill="#f6f6f6" stroke="#222" stroke-width="1"/><path d="M0 8H10M7 5L10 8L7 11" fill="none" stroke="#000" stroke-width="1.4"/></svg>
<svg class="a" style="left:709px;top:357px;" width="16" height="15" viewBox="0 0 16 15"><path d="M1 1H7L10 4V14H1Z" fill="#f6f6f6" stroke="#222" stroke-width="1"/><path d="M6 8H15M12 5L15 8L12 11" fill="none" stroke="#000" stroke-width="1.4"/></svg>
<div class="a" style="left:734px;top:357px;width:1px;height:15px;background:#b8b6b0;"></div>
<svg class="a" style="left:744px;top:357px;" width="16" height="16" viewBox="0 0 16 16"><path d="M6 2L1 7L6 12V9C10 9 13 10 13 15C15 10 14 5 6 5Z" fill="#f0d020" stroke="#c0a010" stroke-width="1"/></svg>
<svg class="a" style="left:768px;top:357px;" width="16" height="16" viewBox="0 0 16 16"><path d="M10 2L15 7L10 12V9C6 9 3 10 3 15C1 10 2 5 10 5Z" fill="#8ab07a" stroke="#6a9060" stroke-width="1"/></svg>
<div class="a" style="left:794px;top:357px;width:1px;height:15px;background:#b8b6b0;"></div>
<svg class="a" style="left:804px;top:357px;" width="15" height="15" viewBox="0 0 15 15"><rect x="1" y="1" width="9" height="10" fill="#f0f0f0" stroke="#aaa"/><rect x="5" y="4" width="9" height="10" fill="#f6f6f6" stroke="#aaa"/></svg>
<svg class="a" style="left:828px;top:357px;" width="14" height="15" viewBox="0 0 14 15"><path d="M3 1L9 11M11 1L5 11" stroke="#aaa" stroke-width="1.2"/><circle cx="4" cy="12" r="2.3" fill="#c08030"/><circle cx="10" cy="12" r="2.3" fill="#c08030"/></svg>
<svg class="a" style="left:853px;top:357px;" width="13" height="15" viewBox="0 0 13 15"><rect x="1" y="2" width="11" height="12" rx="1" fill="#c89040" stroke="#8a6020"/><rect x="3" y="4" width="7" height="9" fill="#f0f0f0"/></svg>
<div class="a" style="left:876px;top:357px;width:1px;height:15px;background:#b8b6b0;"></div>
<svg class="a" style="left:887px;top:357px;" width="15" height="15" viewBox="0 0 15 15"><circle cx="6.5" cy="6.5" r="5.8" fill="#e0e6f0" stroke="#333" stroke-width="1.3"/><rect x="3" y="4" width="6" height="5" fill="#fff" stroke="#333" stroke-dasharray="1 1"/><path d="M10.5 10.5L14 14" stroke="#111" stroke-width="2.2"/></svg>
<svg class="a" style="left:912px;top:357px;" width="15" height="15" viewBox="0 0 15 15"><circle cx="6.5" cy="6.5" r="5.8" fill="#e0e6f0" stroke="#333" stroke-width="1.3"/><rect x="3" y="3" width="4" height="4" fill="#f0d020" stroke="#333"/><rect x="5" y="5" width="4" height="4" fill="#fff" stroke="#333"/><path d="M10.5 10.5L14 14" stroke="#111" stroke-width="2.2"/></svg>
<svg class="a" style="left:936px;top:357px;" width="15" height="15" viewBox="0 0 15 15"><circle cx="6.5" cy="6.5" r="5.8" fill="#e0e6f0" stroke="#333" stroke-width="1.3"/><rect x="4" y="3" width="4" height="7" fill="#fff" stroke="#333"/><path d="M10.5 10.5L14 14" stroke="#111" stroke-width="2.2"/></svg>
<div class="a" style="left:961px;top:357px;width:1px;height:15px;background:#b8b6b0;"></div>
<svg class="a" style="left:971px;top:357px;" width="15" height="15" viewBox="0 0 15 15"><rect x="1" y="1" width="9" height="9" fill="#c6d8ee" stroke="#456"/><rect x="4" y="4" width="10" height="10" fill="#c6d8ee" stroke="#456"/></svg>
<svg class="a" style="left:995px;top:357px;" width="15" height="15" viewBox="0 0 15 15"><rect x="1" y="1" width="9" height="9" fill="#c6d8ee" stroke="#456"/><rect x="4" y="4" width="10" height="10" fill="#c6d8ee" stroke="#456"/><rect x="6" y="8" width="6" height="5" fill="#e8b820" stroke="#333"/></svg>
<svg class="a" style="left:1019px;top:357px;" width="15" height="15" viewBox="0 0 15 15"><rect x="1" y="1" width="9" height="9" fill="#c6d8ee" stroke="#456"/><rect x="4" y="4" width="10" height="10" fill="#c6d8ee" stroke="#456"/><rect x="6" y="8" width="6" height="5" fill="#40a040" stroke="#333"/></svg>
<div class="a" style="left:1044px;top:357px;width:1px;height:15px;background:#b8b6b0;"></div>
<svg class="a" style="left:1055px;top:357px;" width="15" height="15" viewBox="0 0 15 15"><rect x="2" y="7" width="7" height="6" fill="#c6d8ee" stroke="#456"/><circle cx="10" cy="5" r="3.5" fill="#c6d8ee" stroke="#456"/><path d="M0 0h2v2h-2zM13 0h2v2h-2zM0 13h2v2h-2zM13 13h2v2h-2z" fill="#000"/></svg>
<svg class="a" style="left:1079px;top:357px;" width="15" height="15" viewBox="0 0 15 15"><rect x="2" y="7" width="7" height="6" fill="#e8c020" stroke="#456"/><circle cx="10" cy="5" r="3.5" fill="#c6d8ee" stroke="#456"/><path d="M0 0h2v2h-2zM13 0h2v2h-2zM0 13h2v2h-2zM13 13h2v2h-2z" fill="#000"/></svg>
<div class="a" style="left:1104px;top:357px;width:1px;height:15px;background:#b8b6b0;"></div>
<svg class="a" style="left:1113px;top:357px;" width="16" height="15" viewBox="0 0 16 15"><path d="M1 1H15V3L3 14H1Z" fill="#fff" stroke="#000" stroke-width="1.2"/><path d="M3 14L15 3V1L1 14Z" fill="#111"/><path d="M13 1L16 4L14 6Z" fill="#e8a020"/></svg>
<div class="t" style="left:1137.0px;top:355.09px;font-size:19.00px;color:#111;font-family:'Liberation Serif', serif;font-weight:700;transform:scaleX(1.3414);transform-origin:0 0;">T</div>
<svg class="a" style="left:1162px;top:358px;" width="16" height="14" viewBox="0 0 16 14"><path d="M1 4L8 1L15 4L8 7Z M1 7L8 10L15 7 M1 10L8 13L15 10" fill="#eee" stroke="#555" stroke-width="1"/></svg>
<svg class="a" style="left:1186px;top:357px;" width="16" height="15" viewBox="0 0 16 15"><rect x="1" y="1" width="14" height="13" fill="#fff" stroke="#333"/><rect x="1" y="1" width="14" height="2" fill="#888"/><path d="M6 6L4 8.5L6 11M10 6L12 8.5L10 11" fill="none" stroke="#333"/></svg>
<svg class="a" style="left:1210px;top:357px;" width="16" height="15" viewBox="0 0 16 15"><rect x="1" y="0" width="1.5" height="15" fill="#d33"/><rect x="3" y="2" width="8" height="4" fill="#b6cbe8" stroke="#456" stroke-width="0.8"/><rect x="3" y="9" width="12" height="4" fill="#b6cbe8" stroke="#456" stroke-width="0.8"/></svg>
<div class="a" style="left:1235px;top:357px;width:1px;height:15px;background:#b8b6b0;"></div>
<svg class="a" style="left:1247px;top:357px;" width="13" height="15" viewBox="0 0 13 15"><path d="M1 1H9L12 4V14H1Z" fill="#f3f3f3" stroke="#aaa"/><path d="M4 3V8L6 11V14M9 3V8L7 11" stroke="#888" fill="none"/><rect x="5" y="11" width="3" height="3" fill="#36c"/></svg>
<svg class="a" style="left:1270px;top:357px;" width="16" height="15" viewBox="0 0 16 15"><path d="M2 2L14 13M14 2L2 13" stroke="#99a" stroke-width="2.4"/><path d="M1 14L5 10" stroke="#36c" stroke-width="3"/></svg>
<div class="a" style="left:571px;top:379px;width:771px;height:46px;background:#dcdad5;"></div>
<div class="a" style="left:571px;top:425px;width:771px;height:2px;background:#1a1a1a;"></div>
<div class="a" style="left:1341px;top:379px;width:2px;height:48px;background:#1a1a1a;"></div>
<div class="t" style="left:584.0px;top:391.94px;font-size:18.50px;color:#000;font-weight:700;transform:scaleX(1.0973);transform-origin:0 0;">New:</div>
<div class="t" style="left:654.5px;top:391.94px;font-size:18.50px;color:#000;transform:scaleX(0.9953);transform-origin:0 0;">Turns:</div>
<div class="a" style="left:713px;top:388px;width:73px;height:27px;background:#fff;border:1px solid #7a7872;border-top-color:#5a5852;"></div>
<div class="a" style="left:775px;top:389px;width:10px;height:25px;background:#dcdad5;border-left:1px solid #b0aea8;"></div>
<svg class="a" style="left:776px;top:392px;" width="8" height="20" viewBox="0 0 8 20"><path d="M1 4H7L4 1Z" fill="#555"/><path d="M1 14H7L4 17Z" fill="#555"/></svg>
<div class="t" style="left:716.0px;top:391.94px;font-size:18.50px;color:#000;transform:scaleX(1.0553);transform-origin:0 0;">3.00</div>
<div class="t" style="left:797.5px;top:391.94px;font-size:18.50px;color:#000;transform:scaleX(1.0636);transform-origin:0 0;">Divergence:</div>
<div class="a" style="left:908.5px;top:388px;width:84.5px;height:27px;background:#fff;border:1px solid #7a7872;border-top-color:#5a5852;"></div>
<div class="a" style="left:982px;top:389px;width:10px;height:25px;background:#dcdad5;border-left:1px solid #b0aea8;"></div>
<svg class="a" style="left:983px;top:392px;" width="8" height="20" viewBox="0 0 8 20"><path d="M1 4H7L4 1Z" fill="#555"/><path d="M1 14H7L4 17Z" fill="#555"/></svg>
<div class="t" style="left:912.7px;top:391.94px;font-size:18.50px;color:#000;transform:scaleX(1.0325);transform-origin:0 0;">1.000</div>
<div class="t" style="left:1004.0px;top:391.94px;font-size:18.50px;color:#000;transform:scaleX(1.0794);transform-origin:0 0;">Inner radius:</div>
<div class="a" style="left:1121px;top:388px;width:85px;height:27px;background:#fff;border:1px solid #7a7872;border-top-color:#5a5852;"></div>
<div class="a" style="left:1195px;top:389px;width:10px;height:25px;background:#dcdad5;border-left:1px solid #b0aea8;"></div>
<svg class="a" style="left:1196px;top:392px;" width="8" height="20" viewBox="0 0 8 20"><path d="M1 4H7L4 1Z" fill="#555"/><path d="M1 14H7L4 17Z" fill="#555"/></svg>
<div class="t" style="left:1124.8px;top:391.94px;font-size:18.50px;color:#000;transform:scaleX(1.0519);transform-origin:0 0;">0.000</div>
<div class="a" style="left:1211px;top:389px;width:1px;height:25px;background:#b0aea8;"></div>
<svg class="a" style="left:1222px;top:395px;" width="14" height="15" viewBox="0 0 14 15"><rect x="1" y="8" width="12" height="6" fill="#e8c84a" stroke="#8a7a20" stroke-width="1"/><path d="M4 8V5A3 3 0 0 1 10 5V8" fill="none" stroke="#5a8a20" stroke-width="2"/></svg>
<div class="t" style="left:1349.5px;top:382.69px;font-size:17.50px;color:#000;transform:scaleX(0.9737);transform-origin:0 0;">Fill:</div>
<div class="t" style="left:1416.0px;top:382.69px;font-size:17.50px;color:#000;font-style:italic;transform:scaleX(1.0875);transform-origin:0 0;">None</div>
<div class="t" style="left:1348.5px;top:403.89px;font-size:17.50px;color:#000;transform:scaleX(1.1003);transform-origin:0 0;">Stroke:</div>
<div class="a" style="left:1412px;top:402.5px;width:37px;height:20.5px;background:#000;"></div>
<div class="t" style="left:1455.5px;top:403.89px;font-size:17.50px;color:#000;transform:scaleX(0.9761);transform-origin:0 0;">1</div>
<div class="a" style="left:601px;top:426px;width:2px;height:932px;background:#1a1a1a;"></div>
<div class="a" style="left:573.5px;top:679.5px;width:27px;height:28px;background:#c3c1bc;border:1px solid #8a8882;border-top-color:#6a6862;border-right-color:#fff;border-bottom-color:#fff;"></div>
<svg class="a" style="left:576px;top:431px;" width="22" height="22" viewBox="0 0 22 22"><path d="M5 2V18L9 14L12 20L14 19L11 13H17Z" fill="#111"/></svg>
<svg class="a" style="left:576px;top:460px;" width="22" height="22" viewBox="0 0 22 22"><path d="M5 16Q4 5 19 2" fill="none" stroke="#888" stroke-width="1.2"/><rect x="2" y="2.5" width="7" height="6" fill="#44f" stroke="#22d"/><rect x="3.5" y="4" width="3" height="2.5" fill="#99f"/><rect x="16.5" y="0" width="4.5" height="3.8" fill="#ccf" stroke="#55f"/><rect x="0" y="16.5" width="4" height="3.8" fill="#ccf" stroke="#55f"/><path d="M8 6.5L18.5 15L14 18.5Z" fill="#111"/></svg>
<svg class="a" style="left:576px;top:486px;" width="22" height="22" viewBox="0 0 22 22"><defs><linearGradient id="twg" x1="0" y1="0" x2="0" y2="1"><stop offset="0" stop-color="#666"/><stop offset="1" stop-color="#ddd"/></linearGradient></defs><path d="M1 21V13C5 13 8 10 10 6C12 2 16 1 18 3C20 5 18 8 16 7C15 6.5 16 5 17 5C14 4 12 7 13 10C14 13 18 14 21 14V21Z" fill="url(#twg)" stroke="#333" stroke-width="1"/></svg>
<svg class="a" style="left:576px;top:514px;" width="22" height="22" viewBox="0 0 22 22"><circle cx="9" cy="8.5" r="7" fill="#dfeaf5" stroke="#444" stroke-width="1.6"/><path d="M14.5 14L20 19.5" stroke="#333" stroke-width="4.5" stroke-linecap="round"/><path d="M15.5 15L20 19.5" stroke="#f0b020" stroke-width="3" stroke-linecap="round"/></svg>
<svg class="a" style="left:576px;top:543px;" width="22" height="22" viewBox="0 0 22 22"><path d="M2 6L9 2L20 17L13 21Z" fill="#f6c8b0" stroke="#333" stroke-width="1.2"/><path d="M5 7L7 6M7 10L9.5 8.5M9 13L11 12M11 16L13.5 14.5" stroke="#333" stroke-width="1"/></svg>
<svg class="a" style="left:576px;top:570px;" width="22" height="22" viewBox="0 0 22 22"><defs><linearGradient id="rcg" x1="0" y1="0" x2="1" y2="1"><stop offset="0" stop-color="#f4f8fc"/><stop offset="1" stop-color="#8ab0d0"/></linearGradient></defs><rect x="2.5" y="2.5" width="17" height="17" fill="url(#rcg)" stroke="#222" stroke-width="1.2"/></svg>
<svg class="a" style="left:576px;top:598px;" width="22" height="22" viewBox="0 0 22 22"><path d="M11 1L20 5V16L11 21L2 16V5Z" fill="#6a6aa8" stroke="#333"/><path d="M11 1L20 5L11 10L2 5Z" fill="#b0b0e0"/><path d="M11 10V21L2 16V5Z" fill="#8888c0"/></svg>
<svg class="a" style="left:576px;top:626px;" width="22" height="22" viewBox="0 0 22 22"><circle cx="11" cy="11" r="8.5" fill="#f4b8c0" stroke="#333" stroke-width="1.2"/></svg>
<svg class="a" style="left:576px;top:654px;" width="22" height="22" viewBox="0 0 22 22"><path d="M2 9L8.5 3.5L14 7.5L12 14L4.5 15Z" fill="#f4e8a0" stroke="#333" stroke-width="1.1"/><path d="M14.5 6.5L16.5 11L21.5 11.5L17.8 14.8L19 20L14.5 17.3L10 20L11.2 14.8L7.5 11.5L12.5 11Z" fill="#f2e070" stroke="#333" stroke-width="1.1"/></svg>
<svg class="a" style="left:576px;top:682px;" width="22" height="22" viewBox="0 0 22 22"><path d="M11.00 11.00 L11.06 11.05 L11.10 11.12 L11.12 11.19 L11.13 11.28 L11.12 11.36 L11.09 11.45 L11.03 11.54 L10.96 11.61 L10.87 11.68 L10.76 11.73 L10.64 11.76 L10.51 11.78 L10.36 11.77 L10.22 11.73 L10.07 11.68 L9.93 11.59 L9.79 11.48 L9.66 11.34 L9.55 11.18 L9.47 11.00 L9.40 10.80 L9.37 10.58 L9.36 10.35 L9.39 10.11 L9.45 9.87 L9.55 9.64 L9.68 9.41 L9.85 9.19 L10.05 8.99 L10.29 8.81 L10.55 8.67 L10.85 8.55 L11.16 8.47 L11.49 8.44 L11.83 8.45 L12.18 8.50 L12.52 8.60 L12.86 8.76 L13.18 8.95 L13.48 9.20 L13.75 9.49 L13.99 9.81 L14.19 10.18 L14.35 10.58 L14.45 11.00 L14.50 11.44 L14.49 11.90 L14.42 12.35 L14.29 12.81 L14.10 13.25 L13.85 13.68 L13.54 14.07 L13.18 14.43 L12.76 14.75 L12.30 15.01 L11.80 15.22 L11.27 15.36 L10.72 15.44 L10.15 15.44 L9.58 15.37 L9.01 15.23 L8.45 15.01 L7.92 14.72 L7.42 14.36 L6.97 13.93 L6.57 13.44 L6.22 12.89 L5.95 12.30 L5.75 11.66 L5.63 11.00 L5.60 10.32 L5.65 9.63 L5.80 8.94 L6.03 8.27 L6.35 7.62 L6.75 7.01 L7.24 6.45 L7.80 5.95 L8.42 5.52 L9.10 5.17 L9.84 4.90 L10.61 4.73 L11.40 4.65 L12.21 4.67 L13.01 4.80 L13.81 5.03 L14.57 5.37 L15.30 5.80 L15.97 6.33 L16.58 6.94 L17.11 7.64 L17.56 8.40 L17.91 9.23 L18.15 10.10 L18.28 11.00 L18.30 11.92 L18.20 12.85 L17.99 13.77 L17.65 14.66 L17.20 15.51 L16.64 16.30 L15.98 17.03 L15.23 17.67 L14.39 18.21 L13.49 18.66 L12.52 18.98 L11.52 19.19 L10.48 19.26 L9.43 19.21 L8.39 19.02 L7.38 18.70 L6.40 18.25 L5.48 17.68 L4.63 16.98 L3.87 16.18 L3.21 15.28 L2.66 14.30 L2.24 13.25 L1.95 12.14 L1.80 11.00" fill="none" stroke="#333" stroke-width="1.1"/></svg>
<svg class="a" style="left:576px;top:709px;" width="22" height="22" viewBox="0 0 22 22"><path d="M3 3Q5 1 7 2.5Q8.5 4.5 4.5 8Q2 11 4 14Q7 18 11 18Q14 18 18 16" fill="none" stroke="#222" stroke-width="1.2"/><path d="M10.5 15.5L16 2.5L20.5 4.5L15 17.5Z" fill="#f5c020" stroke="#333" stroke-width="1"/><path d="M10.5 15.5L15 17.5L11 20Z" fill="#fff" stroke="#333" stroke-width="1"/><path d="M16 2.5L17 0.5L21 2.5L20.5 4.5Z" fill="#f08030"/></svg>
<svg class="a" style="left:576px;top:737px;" width="22" height="22" viewBox="0 0 22 22"><path d="M2 3H9M3 3Q8 10 6 17" fill="none" stroke="#222" stroke-width="1.1"/><rect x="1.5" y="15.5" width="3.5" height="3.5" fill="#fff" stroke="#222"/><path d="M5 17.5H11" stroke="#222"/><rect x="11" y="15.5" width="2.5" height="3" fill="#fff" stroke="#222"/><path d="M11 13L16 2L21 4.5L16 15Z" fill="#6aa8e0" stroke="#345" stroke-width="1"/><path d="M11 13L16 15L12 18Z" fill="#f0c020" stroke="#333" stroke-width="0.8"/></svg>
<svg class="a" style="left:576px;top:765px;" width="22" height="22" viewBox="0 0 22 22"><path d="M2 2C6 1 9 3 6 8C4 12 6 18 10 19C13 20 17 19 20 18C15 20 8 21 4 17C1 13 4 7 2 2Z" fill="#111"/><path d="M9 15L14 4L19 6.5L14 17Z" fill="#f0d030" stroke="#333" stroke-width="1"/><path d="M14 4L15.5 1L20.5 3.5L19 6.5Z" fill="#5a98d0" stroke="#333" stroke-width="0.8"/><path d="M13.5 5.5L18.5 8" stroke="#d33" stroke-width="1.4"/></svg>
<div class="t" style="left:576.0px;top:792.34px;font-size:25.00px;color:#111;font-weight:700;transform:scaleX(0.9693);transform-origin:0 0;">A</div>
<svg class="a" style="left:591px;top:794px;" width="6" height="24" viewBox="0 0 6 24"><path d="M0.5 0.5H5.5M3 0.5V21.5M0.5 21.5H5.5" stroke="#222" stroke-width="1" fill="none"/></svg>
<svg class="a" style="left:576px;top:821px;" width="22" height="22" viewBox="0 0 22 22"><rect x="10" y="8" width="9" height="12" rx="2" fill="#80c040" stroke="#333"/><rect x="12" y="4" width="4" height="4" fill="#555"/><path d="M2 3h2v2h-2zM6 6h2v2h-2zM3 9h2v2h-2zM8 2h2v2h-2z" fill="#333"/></svg>
<svg class="a" style="left:576px;top:848px;" width="22" height="22" viewBox="0 0 22 22"><path d="M3 15L13 3L19 8L9 20Z" fill="#f4c8c0" stroke="#555" stroke-width="1.2"/></svg>
<svg class="a" style="left:576px;top:876px;" width="22" height="22" viewBox="0 0 22 22"><defs><linearGradient id="bkg" x1="0" y1="0" x2="1" y2="1"><stop offset="0" stop-color="#a8d0f0"/><stop offset="1" stop-color="#2a6aa8"/></linearGradient></defs><ellipse cx="11" cy="19.5" rx="9.5" ry="2" fill="#5ab85a" stroke="#2a7a2a" stroke-width="0.8"/><path d="M5 11Q4 15 6 19" stroke="#5ab85a" stroke-width="2.5" fill="none"/><path d="M4 8L14 3L19.5 11L10 16Z" fill="url(#bkg)" stroke="#223" stroke-width="1.1"/><path d="M4 8L14 3L12 6L6 10Z" fill="#4a9a4a"/><path d="M7 3Q9 0 12 4" fill="none" stroke="#333" stroke-width="0.9"/></svg>
<svg class="a" style="left:576px;top:904px;" width="22" height="22" viewBox="0 0 22 22"><rect x="1" y="1" width="20" height="20" fill="#a8e0a8"/><circle cx="5" cy="5" r="2.5" fill="#fff" stroke="#333"/><circle cx="17" cy="17" r="2.5" fill="#fff" stroke="#333"/><path d="M6 6L16 16" stroke="#333"/></svg>
<svg class="a" style="left:576px;top:932px;" width="22" height="22" viewBox="0 0 22 22"><path d="M4 4L18 2L20 18L2 20Z" fill="#5aa08a" stroke="#333"/><rect x="1" y="1" width="5" height="5" fill="#fff" stroke="#333"/><rect x="16" y="0" width="5" height="5" fill="#fff" stroke="#333"/><rect x="0" y="17" width="5" height="5" fill="#fff" stroke="#333"/><rect x="17" y="16" width="5" height="5" fill="#fff" stroke="#333"/></svg>
<svg class="a" style="left:576px;top:960px;" width="22" height="22" viewBox="0 0 22 22"><path d="M3 19L12 10" stroke="#333" stroke-width="2"/><path d="M11 8L16 3L20 7L15 12Z" fill="#222"/><path d="M2 20L4 18" stroke="#58c" stroke-width="2"/></svg>
<svg class="a" style="left:576px;top:988px;" width="22" height="22" viewBox="0 0 22 22"><rect x="7" y="1" width="8" height="6" fill="#f0d040" stroke="#333"/><rect x="1" y="14" width="7" height="7" fill="#a8c8e8" stroke="#333"/><rect x="14" y="14" width="7" height="7" fill="#a8c8e8" stroke="#333"/><path d="M11 7V11H4V14M11 11H18V14" fill="none" stroke="#333"/></svg>
<div class="a" style="left:627px;top:446.5px;width:801px;height:1.5px;background:#2e2e2e;"></div>
<div class="a" style="left:623.5px;top:450px;width:1.5px;height:893px;background:#2e2e2e;"></div>
<svg class="a" style="left:610px;top:432px;" width="10" height="11" viewBox="0 0 10 11"><path d="M2.5 5V3.5A2.5 2.5 0 0 1 7.5 3.5V5" fill="none" stroke="#555" stroke-width="1.2"/><rect x="1" y="5" width="8" height="6" fill="#e0b020" stroke="#7a5a10" stroke-width="0.8"/></svg>
<svg class="a" style="left:0;top:0" width="1440" height="450"><path d="M629.3 438.5V447 M643.6 442.3V447 M657.8 438.5V447 M672.0 442.3V447 M686.2 438.5V447 M700.5 442.3V447 M714.7 429.0V447 M728.9 442.3V447 M743.2 438.5V447 M757.4 442.3V447 M771.6 438.5V447 M785.9 442.3V447 M800.1 438.5V447 M814.3 442.3V447 M828.5 438.5V447 M842.8 442.3V447 M857.0 429.0V447 M871.2 442.3V447 M885.5 438.5V447 M899.7 442.3V447 M913.9 438.5V447 M928.2 442.3V447 M942.4 438.5V447 M956.6 442.3V447 M970.8 438.5V447 M985.1 442.3V447 M999.3 429.0V447 M1013.5 442.3V447 M1027.8 438.5V447 M1042.0 442.3V447 M1056.2 438.5V447 M1070.5 442.3V447 M1084.7 438.5V447 M1098.9 442.3V447 M1113.1 438.5V447 M1127.4 442.3V447 M1141.6 429.0V447 M1155.8 442.3V447 M1170.1 438.5V447 M1184.3 442.3V447 M1198.5 438.5V447 M1212.8 442.3V447 M1227.0 438.5V447 M1241.2 442.3V447 M1255.4 438.5V447 M1269.7 442.3V447 M1283.9 429.0V447 M1298.1 442.3V447 M1312.4 438.5V447 M1326.6 442.3V447 M1340.8 438.5V447 M1355.1 442.3V447 M1369.3 438.5V447 M1383.5 442.3V447 M1397.7 438.5V447 M1412.0 442.3V447 M1426.2 429.0V447" stroke="#2e2e2e" stroke-width="1.4"/></svg>
<div class="t" style="left:716.2px;top:430.64px;font-size:13.30px;color:#2e2e2e;transform:scaleX(1.2708);transform-origin:0 0;">50</div>
<div class="t" style="left:858.5px;top:430.64px;font-size:13.30px;color:#2e2e2e;transform:scaleX(1.2708);transform-origin:0 0;">75</div>
<div class="t" style="left:1000.8px;top:430.64px;font-size:13.30px;color:#2e2e2e;transform:scaleX(1.2708);transform-origin:0 0;">100</div>
<div class="t" style="left:1143.1px;top:430.64px;font-size:13.30px;color:#2e2e2e;transform:scaleX(1.2708);transform-origin:0 0;">125</div>
<div class="t" style="left:1285.4px;top:430.64px;font-size:13.30px;color:#2e2e2e;transform:scaleX(1.2708);transform-origin:0 0;">150</div>
<svg class="a" style="left:664px;top:440px;" width="16" height="8" viewBox="0 0 16 8"><path d="M1 1H15L8 7Z" fill="#000"/></svg>
<div class="t" style="left:606.5px;top:460.54px;font-size:13.30px;color:#2e2e2e;transform:scaleX(1.0815);transform-origin:0 0;">2</div>
<div class="t" style="left:606.5px;top:472.14px;font-size:13.30px;color:#2e2e2e;transform:scaleX(1.0815);transform-origin:0 0;">2</div>
<div class="t" style="left:606.5px;top:483.74px;font-size:13.30px;color:#2e2e2e;transform:scaleX(1.0815);transform-origin:0 0;">5</div>
<div class="t" style="left:606.5px;top:602.84px;font-size:13.30px;color:#2e2e2e;transform:scaleX(1.0815);transform-origin:0 0;">2</div>
<div class="t" style="left:606.5px;top:614.44px;font-size:13.30px;color:#2e2e2e;transform:scaleX(1.0815);transform-origin:0 0;">0</div>
<div class="t" style="left:606.5px;top:626.04px;font-size:13.30px;color:#2e2e2e;transform:scaleX(1.0815);transform-origin:0 0;">0</div>
<div class="t" style="left:606.5px;top:745.14px;font-size:13.30px;color:#2e2e2e;transform:scaleX(1.0815);transform-origin:0 0;">1</div>
<div class="t" style="left:606.5px;top:756.74px;font-size:13.30px;color:#2e2e2e;transform:scaleX(1.0815);transform-origin:0 0;">7</div>
<div class="t" style="left:606.5px;top:768.34px;font-size:13.30px;color:#2e2e2e;transform:scaleX(1.0815);transform-origin:0 0;">5</div>
<div class="t" style="left:606.5px;top:887.44px;font-size:13.30px;color:#2e2e2e;transform:scaleX(1.0815);transform-origin:0 0;">1</div>
<div class="t" style="left:606.5px;top:899.04px;font-size:13.30px;color:#2e2e2e;transform:scaleX(1.0815);transform-origin:0 0;">5</div>
<div class="t" style="left:606.5px;top:910.64px;font-size:13.30px;color:#2e2e2e;transform:scaleX(1.0815);transform-origin:0 0;">0</div>
<div class="t" style="left:606.5px;top:1029.74px;font-size:13.30px;color:#2e2e2e;transform:scaleX(1.0815);transform-origin:0 0;">1</div>
<div class="t" style="left:606.5px;top:1041.34px;font-size:13.30px;color:#2e2e2e;transform:scaleX(1.0815);transform-origin:0 0;">2</div>
<div class="t" style="left:606.5px;top:1052.94px;font-size:13.30px;color:#2e2e2e;transform:scaleX(1.0815);transform-origin:0 0;">5</div>
<div class="t" style="left:606.5px;top:1172.04px;font-size:13.30px;color:#2e2e2e;transform:scaleX(1.0815);transform-origin:0 0;">1</div>
<div class="t" style="left:606.5px;top:1183.64px;font-size:13.30px;color:#2e2e2e;transform:scaleX(1.0815);transform-origin:0 0;">0</div>
<div class="t" style="left:606.5px;top:1195.24px;font-size:13.30px;color:#2e2e2e;transform:scaleX(1.0815);transform-origin:0 0;">0</div>
<div class="t" style="left:606.5px;top:1314.34px;font-size:13.30px;color:#2e2e2e;transform:scaleX(1.0815);transform-origin:0 0;">7</div>
<div class="t" style="left:606.5px;top:1325.94px;font-size:13.30px;color:#2e2e2e;transform:scaleX(1.0815);transform-origin:0 0;">5</div>
<svg class="a" style="left:0;top:0" width="630" height="1441"><path d="M606.0 459.5H624 M619.5 473.7H624 M616.0 488.0H624 M619.5 502.2H624 M616.0 516.4H624 M619.5 530.6H624 M616.0 544.9H624 M619.5 559.1H624 M616.0 573.3H624 M619.5 587.6H624 M606.0 601.8H624 M619.5 616.0H624 M616.0 630.3H624 M619.5 644.5H624 M616.0 658.7H624 M619.5 673.0H624 M616.0 687.2H624 M619.5 701.4H624 M616.0 715.6H624 M619.5 729.9H624 M606.0 744.1H624 M619.5 758.3H624 M616.0 772.6H624 M619.5 786.8H624 M616.0 801.0H624 M619.5 815.2H624 M616.0 829.5H624 M619.5 843.7H624 M616.0 857.9H624 M619.5 872.2H624 M606.0 886.4H624 M619.5 900.6H624 M616.0 914.9H624 M619.5 929.1H624 M616.0 943.3H624 M619.5 957.5H624 M616.0 971.8H624 M619.5 986.0H624 M616.0 1000.2H624 M619.5 1014.5H624 M606.0 1028.7H624 M619.5 1042.9H624 M616.0 1057.2H624 M619.5 1071.4H624 M616.0 1085.6H624 M619.5 1099.8H624 M616.0 1114.1H624 M619.5 1128.3H624 M616.0 1142.5H624 M619.5 1156.8H624 M606.0 1171.0H624 M619.5 1185.2H624 M616.0 1199.5H624 M619.5 1213.7H624 M616.0 1227.9H624 M619.5 1242.2H624 M616.0 1256.4H624 M619.5 1270.6H624 M616.0 1284.8H624 M619.5 1299.1H624 M606.0 1313.3H624 M619.5 1327.5H624 M616.0 1341.8H624" stroke="#2e2e2e" stroke-width="1.4"/></svg>
<svg class="a" style="left:614px;top:854px;" width="9" height="12" viewBox="0 0 9 12"><path d="M1 1V11L8 6Z" fill="#000"/></svg>
<div class="a" style="left:625px;top:449px;width:803px;height:894px;background:#fff;"></div>
<svg class="a" style="left:0;top:0" width="2395" height="1441"><defs><clipPath id="inkclip"><rect x="625" y="449" width="803" height="894"/></clipPath></defs><g clip-path="url(#inkclip)" fill="none" stroke="#1a1a1a" stroke-width="1.8" stroke-linejoin="round" stroke-linecap="round"><path d="M667.5 667.5 C674.6 662.9 694.6 649.1 710.0 640.0 C725.4 630.9 742.1 622.0 760.0 613.0 C777.9 604.0 804.2 591.8 817.5 586.0 C830.8 580.2 831.2 580.2 840.0 578.0 C848.8 575.8 862.5 573.8 870.0 573.0 C877.5 572.2 882.0 571.0 885.0 573.0 C888.0 575.0 888.0 580.9 888.0 585.0 C888.0 589.1 889.7 586.7 885.0 597.5 C880.3 608.3 869.6 632.9 860.0 650.0 C850.4 667.1 835.2 685.8 827.5 700.0 C819.8 714.2 816.2 727.3 813.8 735.0 C811.3 742.7 812.2 742.0 813.0 746.0 C813.8 750.0 814.2 755.2 818.8 758.8 C823.2 762.3 833.1 765.7 840.0 767.5 C846.9 769.3 850.8 769.1 860.0 769.5 C869.2 769.9 884.6 772.8 895.0 770.0 C905.4 767.2 912.5 765.8 922.5 752.5 C932.5 739.2 947.5 702.9 955.0 690.0 C962.5 677.1 962.9 678.0 967.5 675.0 C972.1 672.0 978.6 672.2 982.5 672.0 C986.4 671.8 987.9 672.0 991.0 674.0 C994.1 676.0 998.8 679.2 1001.0 684.0 C1003.2 688.8 1004.0 696.1 1004.5 702.5 C1005.0 708.9 1005.2 715.0 1004.0 722.5 C1002.8 730.0 999.0 739.6 997.5 747.5 C996.0 755.4 995.6 758.8 995.0 770.0 C994.4 781.2 994.8 805.4 994.0 815.0 C993.2 824.6 992.8 822.1 990.0 827.5 C987.2 832.9 982.1 842.1 977.5 847.5 C972.9 852.9 967.9 856.7 962.5 860.0 C957.1 863.3 953.8 865.8 945.0 867.5 C936.2 869.2 924.2 869.4 910.0 870.0 C895.8 870.6 872.5 870.0 860.0 871.0 C847.5 872.0 843.3 874.1 835.0 876.0 C826.7 877.9 816.7 881.8 810.0 882.5 C803.3 883.2 806.7 883.4 795.0 880.0 C783.3 876.6 757.9 867.8 740.0 862.0 C722.1 856.2 699.2 848.5 687.5 845.0 C675.8 841.5 675.2 842.8 670.0 841.0 C664.8 839.2 660.2 837.2 656.0 834.0 C651.8 830.8 648.5 826.7 645.0 822.0 C641.5 817.3 638.2 810.3 635.0 806.0 C631.8 801.7 627.5 797.7 626.0 796.0"/><path d="M1148.4 856.9 L1148.6 857.0 L1148.7 857.2 L1148.9 857.3 L1149.0 857.4 L1149.1 857.6 L1149.3 857.7 L1149.4 857.9 L1149.5 858.1 L1149.6 858.2 L1149.7 858.4 L1149.8 858.6 L1149.9 858.8 L1150.0 859.0 L1150.1 859.2 L1150.1 859.4 L1150.2 859.6 L1150.2 859.8 L1150.3 860.0 L1150.3 860.2 L1150.3 860.4 L1150.4 860.6 L1150.4 860.8 L1150.4 861.1 L1150.4 861.3 L1150.4 861.5 L1150.3 861.7 L1150.3 862.0 L1150.3 862.2 L1150.2 862.4 L1150.2 862.6 L1150.1 862.9 L1150.0 863.1 L1149.9 863.3 L1149.8 863.5 L1149.7 863.8 L1149.6 864.0 L1149.5 864.2 L1149.4 864.4 L1149.2 864.7 L1149.1 864.9 L1148.9 865.1 L1148.8 865.3 L1148.6 865.5 L1148.4 865.7 L1148.2 865.9 L1148.0 866.1 L1147.8 866.3 L1147.6 866.5 L1147.4 866.6 L1147.2 866.8 L1146.9 867.0 L1146.7 867.2 L1146.5 867.3 L1146.2 867.5 L1145.9 867.6 L1145.7 867.8 L1145.4 867.9 L1145.1 868.0 L1144.8 868.1 L1144.5 868.2 L1144.2 868.3 L1143.9 868.4 L1143.6 868.5 L1143.2 868.6 L1142.9 868.7 L1142.6 868.7 L1142.2 868.8 L1141.9 868.8 L1141.5 868.9 L1141.2 868.9 L1140.8 868.9 L1140.5 868.9 L1140.1 868.9 L1139.7 868.9 L1139.4 868.9 L1139.0 868.8 L1138.6 868.8 L1138.2 868.7 L1137.9 868.7 L1137.5 868.6 L1137.1 868.5 L1136.7 868.4 L1136.3 868.3 L1136.0 868.2 L1135.6 868.1 L1135.2 867.9 L1134.8 867.8 L1134.4 867.6 L1134.0 867.4 L1133.7 867.2 L1133.3 867.0 L1132.9 866.8 L1132.5 866.6 L1132.2 866.4 L1131.8 866.1 L1131.4 865.9 L1131.1 865.6 L1130.7 865.3 L1130.3 865.0 L1130.0 864.7 L1129.6 864.4 L1129.3 864.1 L1129.0 863.7 L1128.6 863.4 L1128.3 863.0 L1128.0 862.7 L1127.7 862.3 L1127.4 861.9 L1127.1 861.5 L1126.8 861.1 L1126.5 860.7 L1126.3 860.2 L1126.0 859.8 L1125.7 859.4 L1125.5 858.9 L1125.3 858.4 L1125.0 858.0 L1124.8 857.5 L1124.6 857.0 L1124.4 856.5 L1124.2 856.0 L1124.0 855.5 L1123.9 854.9 L1123.7 854.4 L1123.6 853.9 L1123.5 853.3 L1123.3 852.8 L1123.2 852.2 L1123.1 851.6 L1123.1 851.1 L1123.0 850.5 L1122.9 849.9 L1122.9 849.3 L1122.9 848.7 L1122.9 848.1 L1122.9 847.5 L1122.9 846.9 L1122.9 846.3 L1123.0 845.7 L1123.0 845.1 L1123.1 844.4 L1123.2 843.8 L1123.3 843.2 L1123.4 842.6 L1123.5 842.0 L1123.7 841.3 L1123.9 840.7 L1124.0 840.1 L1124.2 839.5 L1124.4 838.8 L1124.7 838.2 L1124.9 837.6 L1125.2 837.0 L1125.4 836.4 L1125.7 835.8 L1126.0 835.1 L1126.4 834.5 L1126.7 833.9 L1127.0 833.3 L1127.4 832.7 L1127.8 832.2 L1128.2 831.6 L1128.6 831.0 L1129.0 830.4 L1129.5 829.9 L1129.9 829.3 L1130.4 828.8 L1130.9 828.2 L1131.4 827.7 L1131.9 827.2 L1132.4 826.6 L1133.0 826.1 L1133.6 825.6 L1134.1 825.2 L1134.7 824.7 L1135.3 824.2 L1135.9 823.8 L1136.6 823.3 L1137.2 822.9 L1137.9 822.5 L1138.5 822.1 L1139.2 821.7 L1139.9 821.3 L1140.6 820.9 L1141.3 820.6 L1142.1 820.2 L1142.8 819.9 L1143.6 819.6 L1144.3 819.3 L1145.1 819.0 L1145.9 818.8 L1146.7 818.5 L1147.5 818.3 L1148.3 818.1 L1149.1 817.9 L1149.9 817.7 L1150.7 817.6 L1151.6 817.4 L1152.4 817.3 L1153.3 817.2 L1154.1 817.1 L1155.0 817.0 L1155.9 817.0 L1156.7 817.0 L1157.6 817.0 L1158.5 817.0 L1159.4 817.0 L1160.3 817.0 L1161.2 817.1 L1162.1 817.2 L1163.0 817.3 L1163.9 817.4 L1164.8 817.6 L1165.7 817.7 L1166.6 817.9 L1167.5 818.1 L1168.4 818.4 L1169.3 818.6 L1170.2 818.9 L1171.1 819.2 L1172.0 819.5 L1172.8 819.8 L1173.7 820.2 L1174.6 820.6 L1175.5 821.0 L1176.4 821.4 L1177.2 821.8 L1178.1 822.3 L1178.9 822.8 L1179.8 823.3 L1180.6 823.8 L1181.4 824.3 L1182.3 824.9 L1183.1 825.5 L1183.9 826.1 L1184.7 826.7 L1185.4 827.3 L1186.2 828.0 L1187.0 828.7 L1187.7 829.4 L1188.5 830.1 L1189.2 830.8 L1189.9 831.6 L1190.6 832.4 L1191.3 833.1 L1191.9 834.0 L1192.6 834.8 L1193.2 835.6 L1193.8 836.5 L1194.4 837.4 L1195.0 838.3 L1195.6 839.2 L1196.1 840.1 L1196.7 841.0 L1197.2 842.0 L1197.7 843.0 L1198.1 843.9 L1198.6 844.9 L1199.0 846.0 L1199.4 847.0 L1199.8 848.0 L1200.2 849.1 L1200.6 850.1 L1200.9 851.2 L1201.2 852.3 L1201.5 853.4 L1201.7 854.5 L1202.0 855.6 L1202.2 856.7 L1202.4 857.8 L1202.6 859.0 L1202.7 860.1 L1202.8 861.3 L1202.9 862.4 L1203.0 863.6 L1203.0 864.8 L1203.1 865.9 L1203.1 867.1 L1203.0 868.3 L1203.0 869.5 L1202.9 870.7 L1202.8 871.9 L1202.6 873.1 L1202.5 874.3 L1202.3 875.5 L1202.1 876.7 L1201.8 877.8 L1201.6 879.0 L1201.3 880.2 L1201.0 881.4 L1200.6 882.6 L1200.2 883.8 L1199.8 885.0 L1199.4 886.1 L1199.0 887.3 L1198.5 888.4 L1198.0 889.6 L1197.5 890.7 L1196.9 891.9 L1196.3 893.0 L1195.7 894.1 L1195.1 895.2 L1194.4 896.3 L1193.7 897.4 L1193.0 898.5 L1192.3 899.6 L1191.5 900.6 L1190.7 901.7 L1189.9 902.7 L1189.1 903.7 L1188.2 904.7 L1187.3 905.7 L1186.4 906.6 L1185.5 907.6 L1184.5 908.5 L1183.6 909.4 L1182.6 910.3 L1181.5 911.2 L1180.5 912.0 L1179.4 912.9 L1178.3 913.7 L1177.2 914.5 L1176.1 915.3 L1175.0 916.0 L1173.8 916.7 L1172.6 917.4 L1171.4 918.1 L1170.2 918.8 L1169.0 919.4 L1167.7 920.0 L1166.4 920.6 L1165.1 921.2 L1163.8 921.7 L1162.5 922.2 L1161.2 922.7 L1159.8 923.1 L1158.5 923.5 L1157.1 923.9 L1155.7 924.3 L1154.3 924.6 L1152.9 925.0 L1151.5 925.2 L1150.1 925.5 L1148.6 925.7 L1147.2 925.9 L1145.7 926.0 L1144.3 926.2 L1142.8 926.3 L1141.3 926.3 L1139.9 926.4 L1138.4 926.4 L1136.9 926.4 L1135.4 926.3 L1133.9 926.2 L1132.4 926.1 L1130.9 925.9 L1129.4 925.7 L1127.9 925.5 L1126.5 925.3 L1125.0 925.0 L1123.5 924.7 L1122.0 924.3 L1120.5 923.9 L1119.0 923.5 L1117.5 923.1 L1116.1 922.6 L1114.6 922.1 L1113.2 921.5 L1111.7 920.9 L1110.3 920.3 L1108.9 919.7 L1107.4 919.0 L1106.0 918.3 L1104.6 917.6 L1103.3 916.8 L1101.9 916.0 L1100.5 915.2 L1099.2 914.3 L1097.9 913.4 L1096.6 912.5 L1095.3 911.5 L1094.0 910.5 L1092.7 909.5 L1091.5 908.5 L1090.3 907.4 L1089.1 906.3 L1087.9 905.2 L1086.8 904.0 L1085.6 902.8 L1084.5 901.6 L1083.4 900.4 L1082.4 899.1 L1081.3 897.9 L1080.3 896.5 L1079.3 895.2 L1078.3 893.8 L1077.4 892.5 L1076.5 891.0 L1075.6 889.6 L1074.8 888.2 L1073.9 886.7 L1073.1 885.2 L1072.4 883.7 L1071.6 882.1 L1070.9 880.6 L1070.3 879.0 L1069.6 877.4 L1069.0 875.8 L1068.4 874.2 L1067.9 872.5 L1067.4 870.9 L1066.9 869.2 L1066.5 867.5 L1066.1 865.8 L1065.7 864.1 L1065.4 862.4 L1065.1 860.7 L1064.8 858.9 L1064.6 857.2 L1064.4 855.4 L1064.3 853.7 L1064.1 851.9 L1064.1 850.1 L1064.0 848.3 L1064.0 846.5 L1064.1 844.7 L1064.1 843.0 L1064.3 841.2 L1064.4 839.4 L1064.6 837.6 L1064.8 835.8 L1065.1 834.0 L1065.4 832.2 L1065.8 830.4 L1066.1 828.6 L1066.6 826.8 L1067.0 825.0 L1067.5 823.2 L1068.1 821.5 L1068.6 819.7 L1069.3 818.0 L1069.9 816.2 L1070.6 814.5 L1071.3 812.8 L1072.1 811.1 L1072.9 809.4 L1073.8 807.7 L1074.6 806.0 L1075.6 804.4 L1076.5 802.7 L1077.5 801.1 L1078.5 799.5 L1079.6 797.9 L1080.7 796.4 L1081.8 794.8 L1083.0 793.3 L1084.2 791.8 L1085.5 790.3 L1086.7 788.9 L1088.0 787.5 L1089.4 786.1 L1090.8 784.7 L1092.2 783.3 L1093.6 782.0 L1095.1 780.7 L1096.6 779.5 L1098.1 778.2 L1099.6 777.0 L1101.2 775.8 L1102.8 774.7 L1104.5 773.6 L1106.1 772.5 L1107.8 771.4 L1109.5 770.4 L1111.3 769.5 L1113.0 768.5 L1114.8 767.6 L1116.6 766.7 L1118.5 765.9 L1120.3 765.1 L1122.2 764.3 L1124.1 763.6 L1126.0 762.9 L1127.9 762.3 L1129.9 761.7 L1131.9 761.1 L1133.8 760.6 L1135.8 760.1 L1137.8 759.7 L1139.9 759.3 L1141.9 758.9 L1143.9 758.6 L1146.0 758.3 L1148.1 758.1 L1150.1 757.9 L1152.2 757.8 L1154.3 757.7 L1156.4 757.6 L1158.5 757.6 L1160.6 757.6 L1162.7 757.7 L1164.8 757.8 L1166.9 758.0 L1169.0 758.2 L1171.1 758.5 L1173.2 758.8 L1175.3 759.1 L1177.4 759.5 L1179.5 760.0 L1181.6 760.5 L1183.7 761.0 L1185.8 761.6 L1187.8 762.2 L1189.9 762.8 L1191.9 763.6 L1194.0 764.3 L1196.0 765.1 L1198.0 765.9 L1200.0 766.8 L1202.0 767.8 L1203.9 768.7 L1205.9 769.7 L1207.8 770.8 L1209.7 771.9 L1211.6 773.0 L1213.5 774.2 L1215.3 775.5 L1217.1 776.7 L1218.9 778.0 L1220.7 779.4 L1222.4 780.8 L1224.2 782.2 L1225.9 783.7 L1227.5 785.2 L1229.2 786.7 L1230.8 788.3 L1232.3 789.9 L1233.9 791.5 L1235.4 793.2 L1236.9 795.0 L1238.3 796.7 L1239.7 798.5 L1241.1 800.3 L1242.4 802.2 L1243.7 804.1 L1245.0 806.0 L1246.2 807.9 L1247.4 809.9 L1248.6 811.9 L1249.7 813.9 L1250.7 816.0 L1251.7 818.1 L1252.7 820.2 L1253.7 822.3 L1254.5 824.4 L1255.4 826.6 L1256.2 828.8 L1257.0 831.0 L1257.7 833.3 L1258.3 835.5 L1259.0 837.8 L1259.5 840.1 L1260.1 842.4 L1260.5 844.7 L1261.0 847.1 L1261.4 849.4 L1261.7 851.8 L1262.0 854.1 L1262.2 856.5 L1262.4 858.9 L1262.5 861.3 L1262.6 863.7 L1262.6 866.1 L1262.6 868.5 L1262.5 870.9 L1262.4 873.3 L1262.3 875.7 L1262.0 878.2 L1261.8 880.6 L1261.4 883.0 L1261.0 885.4 L1260.6 887.8 L1260.1 890.2 L1259.6 892.6 L1259.0 895.0 L1258.4 897.4 L1257.7 899.7 L1257.0 902.1 L1256.2 904.4 L1255.3 906.8 L1254.5 909.1 L1253.5 911.4 L1252.5 913.7 L1251.5 915.9 L1250.4 918.2 L1249.3 920.4 L1248.1 922.6 L1246.8 924.8 L1245.6 927.0 L1244.2 929.1 L1242.9 931.2 L1241.4 933.3 L1240.0 935.4 L1238.5 937.4 L1236.9 939.4 L1235.3 941.4 L1233.6 943.3 L1231.9 945.3 L1230.2 947.1 L1228.4 949.0 L1226.6 950.8 L1224.8 952.6 L1222.9 954.3 L1220.9 956.0 L1218.9 957.7 L1216.9 959.3 L1214.9 960.9 L1212.8 962.4 L1210.7 963.9 L1208.5 965.4 L1206.3 966.8 L1204.1 968.1 L1201.8 969.5 L1199.6 970.7 L1197.2 972.0 L1194.9 973.1 L1192.5 974.3 L1190.1 975.4 L1187.7 976.4 L1185.2 977.4 L1182.8 978.3 L1180.3 979.2 L1177.7 980.1 L1175.2 980.8 L1172.6 981.6 L1170.1 982.2 L1167.5 982.9 L1164.8 983.4 L1162.2 984.0 L1159.6 984.4 L1156.9 984.8 L1154.2 985.2 L1151.5 985.5 L1148.8 985.7 L1146.1 985.9 L1143.4 986.0 L1140.7 986.1 L1138.0 986.1 L1135.3 986.0 L1132.6 985.9 L1129.8 985.8 L1127.1 985.5 L1124.4 985.3 L1121.7 984.9 L1118.9 984.5 L1116.2 984.1 L1113.5 983.6 L1110.8 983.0 L1108.1 982.4 L1105.4 981.7 L1102.8 981.0 L1100.1 980.2 L1097.4 979.3 L1094.8 978.4 L1092.2 977.4 L1089.6 976.4 L1087.0 975.3 L1084.4 974.2 L1081.9 973.0 L1079.4 971.8 L1076.9 970.5 L1074.4 969.1 L1072.0 967.7 L1069.5 966.2 L1067.2 964.7 L1064.8 963.1 L1062.5 961.5 L1060.2 959.9 L1057.9 958.1 L1055.6 956.4 L1053.4 954.5 L1051.3 952.7 L1049.1 950.8 L1047.1 948.8 L1045.0 946.8 L1043.0 944.7 L1041.0 942.6 L1039.1 940.5 L1037.2 938.3 L1035.4 936.1 L1033.6 933.8 L1031.8 931.5 L1030.1 929.1 L1028.4 926.7 L1026.8 924.3 L1025.3 921.8 L1023.8 919.3 L1022.3 916.8 L1020.9 914.2 L1019.5 911.6 L1018.2 909.0 L1017.0 906.3 L1015.8 903.6 L1014.6 900.9 L1013.6 898.1 L1012.5 895.3 L1011.6 892.5 L1010.7 889.7 L1009.8 886.9 L1009.0 884.0 L1008.3 881.1 L1007.6 878.2 L1007.0 875.3 L1006.4 872.3 L1005.9 869.4 L1005.5 866.4 L1005.1 863.4 L1004.8 860.4 L1004.6 857.4 L1004.4 854.4 L1004.3 851.4 L1004.3 848.3 L1004.3 845.3 L1004.3 842.3 L1004.5 839.2 L1004.7 836.2 L1005.0 833.2 L1005.3 830.1 L1005.7 827.1 L1006.1 824.1 L1006.7 821.0 L1007.3 818.0 L1007.9 815.0 L1008.6 812.0 L1009.4 809.0 L1010.3 806.1 L1011.2 803.1 L1012.1 800.2 L1013.2 797.3 L1014.3 794.4 L1015.4 791.5 L1016.6 788.6 L1017.9 785.8 L1019.3 783.0 L1020.7 780.2 L1022.1 777.4 L1023.7 774.7 L1025.3 772.0 L1026.9 769.3 L1028.6 766.6 L1030.4 764.0 L1032.2 761.4 L1034.1 758.9 L1036.0 756.4 L1038.0 753.9 L1040.0 751.5 L1042.1 749.1 L1044.2 746.8 L1046.4 744.4 L1048.7 742.2 L1051.0 740.0 L1053.3 737.8 L1055.7 735.7 L1058.2 733.6 L1060.6 731.6 L1063.2 729.6 L1065.8 727.7 L1068.4 725.8 L1071.0 724.0 L1073.7 722.2 L1076.5 720.5 L1079.3 718.8 L1082.1 717.2 L1084.9 715.7 L1087.8 714.2 L1090.8 712.8 L1093.7 711.4 L1096.7 710.1 L1099.7 708.9 L1102.8 707.7 L1105.9 706.6 L1109.0 705.6 L1112.1 704.6 L1115.3 703.6 L1118.4 702.8 L1121.6 702.0 L1124.9 701.3 L1128.1 700.6 L1131.4 700.0 L1134.6 699.5 L1137.9 699.0 L1141.2 698.7 L1144.5 698.3 L1147.8 698.1 L1151.2 697.9 L1154.5 697.8 L1157.9 697.8 L1161.2 697.8 L1164.5 697.9 L1167.9 698.1 L1171.2 698.3 L1174.6 698.7 L1177.9 699.0 L1181.3 699.5 L1184.6 700.0 L1187.9 700.6 L1191.3 701.3 L1194.6 702.0 L1197.9 702.8 L1201.1 703.7 L1204.4 704.7 L1207.7 705.7 L1210.9 706.8 L1214.1 707.9 L1217.3 709.2 L1220.5 710.5 L1223.6 711.8 L1226.7 713.3 L1229.8 714.8 L1232.9 716.3 L1235.9 718.0 L1238.9 719.7 L1241.9 721.4 L1244.8 723.2 L1247.7 725.1 L1250.6 727.1 L1253.4 729.1 L1256.2 731.2 L1258.9 733.3 L1261.6 735.5 L1264.3 737.7 L1266.9 740.1 L1269.4 742.4 L1272.0 744.9 L1274.4 747.3 L1276.9 749.9 L1279.2 752.5 L1281.5 755.1 L1283.8 757.8 L1286.0 760.5 L1288.2 763.3 L1290.3 766.2 L1292.3 769.1 L1294.3 772.0 L1296.2 775.0 L1298.1 778.0 L1299.9 781.0 L1301.6 784.2 L1303.3 787.3 L1304.9 790.5 L1306.4 793.7 L1307.9 796.9 L1309.3 800.2 L1310.7 803.6 L1311.9 806.9 L1313.1 810.3 L1314.3 813.7 L1315.3 817.1 L1316.3 820.6 L1317.2 824.1 L1318.1 827.6 L1318.9 831.1 L1319.6 834.7 L1320.2 838.2 L1320.7 841.8 L1321.2 845.4 L1321.6 849.0 L1321.9 852.7 L1322.2 856.3 L1322.4 859.9 L1322.5 863.6 L1322.5 867.2 L1322.4 870.9 L1322.3 874.6 L1322.1 878.2 L1321.8 881.9 L1321.4 885.5 L1321.0 889.2 L1320.5 892.9 L1319.9 896.5 L1319.2 900.1 L1318.5 903.7 L1317.6 907.4 L1316.7 910.9 L1315.8 914.5 L1314.7 918.1 L1313.6 921.6 L1312.4 925.2 L1311.1 928.7 L1309.7 932.1 L1308.3 935.6 L1306.8 939.0 L1305.2 942.4 L1303.6 945.8 L1301.8 949.1 L1300.0 952.4 L1298.2 955.7 L1296.2 958.9 L1294.2 962.1 L1292.2 965.2"/></g></svg>
<div class="a" style="left:1430px;top:443px;width:14px;height:898px;background:#c3c1bc;"></div>
<div class="a" style="left:1430px;top:443px;width:14px;height:14px;background:#dcdad5;border:1px solid #3a3a38;border-top-color:#fff;border-left-color:#fff;"></div>
<svg class="a" style="left:1432px;top:445px;" width="10" height="10" viewBox="0 0 10 10"><path d="M1 7H9L5 2Z" fill="#000"/></svg>
<div class="a" style="left:1430px;top:818px;width:14px;height:150px;background:#dcdad5;border:1px solid #3a3a38;border-top-color:#fff;border-left-color:#fff;"></div>
<div class="a" style="left:1430px;top:1327px;width:14px;height:14px;background:#dcdad5;border:1px solid #3a3a38;border-top-color:#fff;border-left-color:#fff;"></div>
<svg class="a" style="left:1432px;top:1329px;" width="10" height="10" viewBox="0 0 10 10"><path d="M1 3H9L5 8Z" fill="#000"/></svg>
<svg class="a" style="left:1431px;top:429px;" width="13" height="13" viewBox="0 0 13 13"><circle cx="5.5" cy="5.5" r="4.3" fill="none" stroke="#999" stroke-width="1.3"/><path d="M8.5 8.5L12 12" stroke="#999" stroke-width="1.8"/></svg>
<div class="a" style="left:1446px;top:880px;width:2px;height:2px;background:#555;"></div>
<div class="a" style="left:1446px;top:884px;width:2px;height:2px;background:#555;"></div>
<div class="a" style="left:1446px;top:888px;width:2px;height:2px;background:#555;"></div>
<div class="a" style="left:1446px;top:892px;width:2px;height:2px;background:#555;"></div>
<div class="a" style="left:1446px;top:896px;width:2px;height:2px;background:#555;"></div>
<div class="a" style="left:1446px;top:900px;width:2px;height:2px;background:#555;"></div>
<div class="a" style="left:1446px;top:904px;width:2px;height:2px;background:#555;"></div>
<div class="a" style="left:1446px;top:908px;width:2px;height:2px;background:#555;"></div>
<div class="a" style="left:626px;top:1344px;width:802px;height:14px;background:#c3c1bc;"></div>
<div class="a" style="left:626px;top:1344px;width:14px;height:14px;background:#dcdad5;border:1px solid #3a3a38;border-top-color:#fff;border-left-color:#fff;"></div>
<svg class="a" style="left:628px;top:1346px;" width="10" height="10" viewBox="0 0 10 10"><path d="M7 1V9L2 5Z" fill="#000"/></svg>
<div class="a" style="left:942px;top:1344px;width:169px;height:14px;background:#dcdad5;border:1px solid #3a3a38;border-top-color:#fff;border-left-color:#fff;"></div>
<div class="a" style="left:1414px;top:1344px;width:14px;height:14px;background:#dcdad5;border:1px solid #3a3a38;border-top-color:#fff;border-left-color:#fff;"></div>
<svg class="a" style="left:1416px;top:1346px;" width="10" height="10" viewBox="0 0 10 10"><path d="M3 1V9L8 5Z" fill="#000"/></svg>
<svg class="a" style="left:1430px;top:1345px;" width="12" height="13" viewBox="0 0 12 13"><path d="M1 1L11 7L3 12Z" fill="#7ab87a"/><path d="M1 1L11 7L5 8Z" fill="#d77"/><path d="M1 1L5 8L3 12Z" fill="#77d"/></svg>
<div class="a" style="left:1450px;top:426px;width:1px;height:932px;background:#b8b6b0;"></div>
<div class="a" style="left:1455px;top:429px;width:22px;height:23px;background:#c3c1bc;border:1px solid #6a6862;border-right-color:#fff;border-bottom-color:#fff;"></div>
<div class="a" style="left:1455px;top:597px;width:22px;height:22px;background:#c3c1bc;border:1px solid #6a6862;border-right-color:#fff;border-bottom-color:#fff;"></div>
<div class="a" style="left:1455px;top:669.5px;width:22px;height:22.2px;background:#c3c1bc;border:1px solid #6a6862;border-right-color:#fff;border-bottom-color:#fff;"></div>
<div class="a" style="left:1455px;top:752px;width:22px;height:22px;background:#c3c1bc;border:1px solid #6a6862;border-right-color:#fff;border-bottom-color:#fff;"></div>
<div class="a" style="left:1455px;top:883px;width:22px;height:22px;background:#c3c1bc;border:1px solid #6a6862;border-right-color:#fff;border-bottom-color:#fff;"></div>
<div class="a" style="left:1455px;top:907px;width:22px;height:22px;background:#c3c1bc;border:1px solid #6a6862;border-right-color:#fff;border-bottom-color:#fff;"></div>
<div class="a" style="left:1457px;top:458px;width:18px;height:2px;background:#fff;border-top:1px solid #a8a6a0;"></div>
<div class="a" style="left:1457px;top:589px;width:18px;height:2px;background:#fff;border-top:1px solid #a8a6a0;"></div>
<div class="a" style="left:1457px;top:744px;width:18px;height:2px;background:#fff;border-top:1px solid #a8a6a0;"></div>
<div class="a" style="left:1457px;top:852.7px;width:18px;height:2px;background:#fff;border-top:1px solid #a8a6a0;"></div>
<svg class="a" style="left:1457px;top:431.5px;" width="18" height="18" viewBox="0 0 18 18"><path d="M4 1L7 4L4 7L1 4Z" fill="none" stroke="#33e" stroke-width="1.3"/><path d="M5 5L13 12" stroke="#111" stroke-width="1.2"/><path d="M14 10L17 13L14 16L11 13Z" fill="none" stroke="#393" stroke-width="1.3"/></svg>
<svg class="a" style="left:1457px;top:466px;" width="18" height="18" viewBox="0 0 18 18"><path d="M4 1L7 4L4 7L1 4Z" fill="none" stroke="#33e" stroke-width="1.3"/><path d="M5 5L13 12" stroke="#111" stroke-width="1.2"/><path d="M14 10L17 13L14 16L11 13Z" fill="none" stroke="#393" stroke-width="1.3"/></svg>
<svg class="a" style="left:1457px;top:489.25px;" width="18" height="18" viewBox="0 0 18 18"><path d="M3 15H15V3" fill="none" stroke="#555" stroke-width="1" stroke-dasharray="2 1.5"/><circle cx="9" cy="9" r="1.5" fill="#5a5"/></svg>
<svg class="a" style="left:1457px;top:514.65px;" width="18" height="18" viewBox="0 0 18 18"><path d="M3 15H15V3" fill="none" stroke="#555" stroke-width="1" stroke-dasharray="2 1.5"/><circle cx="9" cy="9" r="1.5" fill="#5a5"/></svg>
<svg class="a" style="left:1457px;top:537.85px;" width="18" height="18" viewBox="0 0 18 18"><path d="M3 15H15V3" fill="none" stroke="#555" stroke-width="1" stroke-dasharray="2 1.5"/><circle cx="9" cy="9" r="1.5" fill="#5a5"/></svg>
<svg class="a" style="left:1457px;top:562px;" width="18" height="18" viewBox="0 0 18 18"><path d="M3 15H15V3" fill="none" stroke="#555" stroke-width="1" stroke-dasharray="2 1.5"/><circle cx="9" cy="9" r="1.5" fill="#5a5"/></svg>
<svg class="a" style="left:1457px;top:599px;" width="18" height="18" viewBox="0 0 18 18"><path d="M4 1L7 4L4 7L1 4Z" fill="none" stroke="#33e" stroke-width="1.3"/><path d="M5 5L13 12" stroke="#111" stroke-width="1.2"/><path d="M14 10L17 13L14 16L11 13Z" fill="none" stroke="#393" stroke-width="1.3"/></svg>
<svg class="a" style="left:1457px;top:622.35px;" width="18" height="18" viewBox="0 0 18 18"><path d="M3 15Q9 14 12 8Q13 5 7 3" fill="none" stroke="#2a2" stroke-width="1.6"/></svg>
<svg class="a" style="left:1457px;top:646.45px;" width="18" height="18" viewBox="0 0 18 18"><path d="M2 15L16 3M4 5Q9 9 14 13" fill="none" stroke="#2a2" stroke-width="1.2"/><circle cx="9" cy="9" r="1.6" fill="#333"/></svg>
<svg class="a" style="left:1457px;top:671.6px;" width="18" height="18" viewBox="0 0 18 18"><path d="M3 4Q12 4 14 12" fill="none" stroke="#888" stroke-width="1.6"/><path d="M6 13L9 10L12 13L9 16Z" fill="#5a5" stroke="#393"/></svg>
<svg class="a" style="left:1457px;top:694.75px;" width="18" height="18" viewBox="0 0 18 18"><path d="M3 4Q12 4 14 12" fill="none" stroke="#888" stroke-width="1.6"/><path d="M6 6L9 3L12 6L9 9Z" fill="#5a5" stroke="#393"/></svg>
<svg class="a" style="left:1457px;top:717.9px;" width="18" height="18" viewBox="0 0 18 18"><path d="M2 16L16 2" stroke="#d33" stroke-width="2" stroke-dasharray="3 2"/><circle cx="9" cy="9" r="1.8" fill="#393"/></svg>
<svg class="a" style="left:1457px;top:754px;" width="18" height="18" viewBox="0 0 18 18"><path d="M4 1L7 4L4 7L1 4Z" fill="none" stroke="#33e" stroke-width="1.3"/><path d="M5 5L13 12" stroke="#111" stroke-width="1.2"/><path d="M14 10L17 13L14 16L11 13Z" fill="none" stroke="#393" stroke-width="1.3"/></svg>
<svg class="a" style="left:1457px;top:777.25px;" width="18" height="18" viewBox="0 0 18 18"><path d="M3 15H15V3" fill="none" stroke="#555" stroke-width="1" stroke-dasharray="2 1.5"/><circle cx="7" cy="8" r="1.5" fill="#5a5"/></svg>
<svg class="a" style="left:1457px;top:801.45px;" width="18" height="18" viewBox="0 0 18 18"><path d="M3 15H15V3" fill="none" stroke="#555" stroke-width="1" stroke-dasharray="2 1.5"/><circle cx="7" cy="8" r="1.5" fill="#5a5"/></svg>
<div class="t" style="left:1457.0px;top:827.76px;font-size:18.00px;color:#111;font-weight:700;transform:scaleX(1.3847);transform-origin:0 0;">A</div>
<svg class="a" style="left:1457px;top:860.85px;" width="18" height="18" viewBox="0 0 18 18"><rect x="4" y="2" width="10" height="14" fill="#f8f8f8" stroke="#444"/></svg>
<svg class="a" style="left:1457px;top:885px;" width="18" height="18" viewBox="0 0 18 18"><path d="M5 1V17M9 1V17M13 1V17M1 5H17M1 9H17M1 13H17" stroke="#22e" stroke-width="1.4"/></svg>
<svg class="a" style="left:1457px;top:909px;" width="18" height="18" viewBox="0 0 18 18"><path d="M3 2V16M15 2V16M12 3L6 15" stroke="#22e" stroke-width="1.6"/></svg>
<div class="a" style="left:1450px;top:1358px;width:29px;height:1.5px;background:#1a1a1a;"></div>
<div class="a" style="left:588px;top:1361px;width:879px;height:1px;background:#1a1a1a;"></div>
<div class="a" style="left:572px;top:1361px;width:16.5px;height:16px;background:#fff;border:1px solid #888;"></div>
<svg class="a" style="left:572px;top:1362px;" width="16.5" height="16" viewBox="0 0 16.5 16"><path d="M1 1L15.5 15M15.5 1L1 15" stroke="#a03030" stroke-width="1.5"/></svg>
<svg class="a" style="left:0;top:0" width="1480" height="1441"><rect x="588.20" y="1362.0" width="15.17" height="15.0" fill="#000000"/><rect x="603.07" y="1362.0" width="15.17" height="15.0" fill="#1a1a1a"/><rect x="617.94" y="1362.0" width="15.17" height="15.0" fill="#333333"/><rect x="632.81" y="1362.0" width="15.17" height="15.0" fill="#4d4d4d"/><rect x="647.68" y="1362.0" width="15.17" height="15.0" fill="#666666"/><rect x="662.55" y="1362.0" width="15.17" height="15.0" fill="#808080"/><rect x="677.42" y="1362.0" width="15.17" height="15.0" fill="#999999"/><rect x="692.29" y="1362.0" width="15.17" height="15.0" fill="#b3b3b3"/><rect x="707.16" y="1362.0" width="15.17" height="15.0" fill="#cccccc"/><rect x="722.03" y="1362.0" width="15.17" height="15.0" fill="#e6e6e6"/><rect x="736.90" y="1362.0" width="15.17" height="15.0" fill="#ececec"/><rect x="751.77" y="1362.0" width="15.17" height="15.0" fill="#f2f2f2"/><rect x="766.64" y="1362.0" width="15.17" height="15.0" fill="#f9f9f9"/><rect x="781.51" y="1362.0" width="15.17" height="15.0" fill="#ffffff"/><rect x="796.38" y="1362.0" width="15.17" height="15.0" fill="#800000"/><rect x="811.25" y="1362.0" width="15.17" height="15.0" fill="#ff0000"/><rect x="826.12" y="1362.0" width="15.17" height="15.0" fill="#808000"/><rect x="840.99" y="1362.0" width="15.17" height="15.0" fill="#ffff00"/><rect x="855.86" y="1362.0" width="15.17" height="15.0" fill="#008000"/><rect x="870.73" y="1362.0" width="15.17" height="15.0" fill="#00ff00"/><rect x="885.60" y="1362.0" width="15.17" height="15.0" fill="#008080"/><rect x="900.47" y="1362.0" width="15.17" height="15.0" fill="#00ffff"/><rect x="915.34" y="1362.0" width="15.17" height="15.0" fill="#000080"/><rect x="930.21" y="1362.0" width="15.17" height="15.0" fill="#0000ff"/><rect x="945.08" y="1362.0" width="15.17" height="15.0" fill="#800080"/><rect x="959.95" y="1362.0" width="15.17" height="15.0" fill="#ff00ff"/><rect x="974.82" y="1362.0" width="15.17" height="15.0" fill="#2b0000"/><rect x="989.69" y="1362.0" width="15.17" height="15.0" fill="#550000"/><rect x="1004.56" y="1362.0" width="15.17" height="15.0" fill="#800000"/><rect x="1019.43" y="1362.0" width="15.17" height="15.0" fill="#aa0000"/><rect x="1034.30" y="1362.0" width="15.17" height="15.0" fill="#d40000"/><rect x="1049.17" y="1362.0" width="15.17" height="15.0" fill="#ff0000"/><rect x="1064.04" y="1362.0" width="15.17" height="15.0" fill="#ff2a2a"/><rect x="1078.91" y="1362.0" width="15.17" height="15.0" fill="#ff5555"/><rect x="1093.78" y="1362.0" width="15.17" height="15.0" fill="#ff8080"/><rect x="1108.65" y="1362.0" width="15.17" height="15.0" fill="#ffaaaa"/><rect x="1123.52" y="1362.0" width="15.17" height="15.0" fill="#ffd5d5"/><rect x="1138.39" y="1362.0" width="15.17" height="15.0" fill="#280b0b"/><rect x="1153.26" y="1362.0" width="15.17" height="15.0" fill="#501616"/><rect x="1168.13" y="1362.0" width="15.17" height="15.0" fill="#782121"/><rect x="1183.00" y="1362.0" width="15.17" height="15.0" fill="#a02c2c"/><rect x="1197.87" y="1362.0" width="15.17" height="15.0" fill="#c83737"/><rect x="1212.74" y="1362.0" width="15.17" height="15.0" fill="#d35f5f"/><rect x="1227.61" y="1362.0" width="15.17" height="15.0" fill="#de8787"/><rect x="1242.48" y="1362.0" width="15.17" height="15.0" fill="#e9afaf"/><rect x="1257.35" y="1362.0" width="15.17" height="15.0" fill="#f4d7d7"/><rect x="1272.22" y="1362.0" width="15.17" height="15.0" fill="#241c1c"/><rect x="1287.09" y="1362.0" width="15.17" height="15.0" fill="#483737"/><rect x="1301.96" y="1362.0" width="15.17" height="15.0" fill="#6c5353"/><rect x="1316.83" y="1362.0" width="15.17" height="15.0" fill="#916f6f"/><rect x="1331.70" y="1362.0" width="15.17" height="15.0" fill="#ac9393"/><rect x="1346.57" y="1362.0" width="15.17" height="15.0" fill="#c8b7b7"/><rect x="1361.44" y="1362.0" width="15.17" height="15.0" fill="#e3dbdb"/><rect x="1376.31" y="1362.0" width="15.17" height="15.0" fill="#2b1100"/><rect x="1391.18" y="1362.0" width="15.17" height="15.0" fill="#552200"/><rect x="1406.05" y="1362.0" width="15.17" height="15.0" fill="#803300"/><rect x="1420.92" y="1362.0" width="15.17" height="15.0" fill="#aa4400"/><rect x="1435.79" y="1362.0" width="15.17" height="15.0" fill="#d45500"/><rect x="1450.66" y="1362.0" width="15.17" height="15.0" fill="#ff6600"/></svg>
<svg class="a" style="left:1470px;top:1364px;" width="8" height="10" viewBox="0 0 8 10"><path d="M7 1V9L1 5Z" fill="#000"/></svg>
<div class="a" style="left:572px;top:1381px;width:896px;height:14px;background:#c3c1bc;"></div>
<div class="a" style="left:572px;top:1381px;width:13px;height:14px;background:#dcdad5;border:1px solid #3a3a38;border-top-color:#fff;border-left-color:#fff;"></div>
<svg class="a" style="left:574px;top:1383px;" width="9" height="10" viewBox="0 0 9 10"><path d="M6 1V9L2 5Z" fill="#999"/></svg>
<div class="a" style="left:585px;top:1381px;width:121px;height:14px;background:#dcdad5;border:1px solid #3a3a38;border-top-color:#fff;border-left-color:#fff;"></div>
<div class="a" style="left:1454.5px;top:1381px;width:13.5px;height:14px;background:#dcdad5;border:1px solid #3a3a38;border-top-color:#fff;border-left-color:#fff;"></div>
<svg class="a" style="left:1457px;top:1383px;" width="9" height="10" viewBox="0 0 9 10"><path d="M3 1V9L7 5Z" fill="#000"/></svg>
<div class="t" style="left:574.0px;top:1398.39px;font-size:17.50px;color:#000;transform:scaleX(1.0104);transform-origin:0 0;">Fill:</div>
<div class="t" style="left:642.5px;top:1398.39px;font-size:17.50px;color:#000;transform:scaleX(1.0112);transform-origin:0 0;">N/A</div>
<div class="t" style="left:574.0px;top:1419.19px;font-size:17.50px;color:#000;transform:scaleX(1.1003);transform-origin:0 0;">Stroke:</div>
<div class="t" style="left:642.5px;top:1419.19px;font-size:17.50px;color:#000;transform:scaleX(1.0112);transform-origin:0 0;">N/A</div>
<div class="t" style="left:680.5px;top:1409.19px;font-size:17.50px;color:#000;transform:scaleX(1.0285);transform-origin:0 0;">O:</div>
<div class="a" style="left:701.5px;top:1404px;width:43.5px;height:26px;background:#e8e6e2;border:1px solid #9a9892;"></div>
<div class="a" style="left:734px;top:1405px;width:10px;height:24px;background:#dcdad5;border-left:1px solid #b0aea8;"></div>
<svg class="a" style="left:735px;top:1407px;" width="8" height="20" viewBox="0 0 8 20"><path d="M1 4H7L4 1Z" fill="#888"/><path d="M1 15H7L4 18Z" fill="#888"/></svg>
<div class="t" style="left:705.5px;top:1409.19px;font-size:17.50px;color:#999;transform:scaleX(0.9247);transform-origin:0 0;">0</div>
<div class="a" style="left:748px;top:1398px;width:1px;height:38px;background:#b8b6b0;"></div>
<svg class="a" style="left:754px;top:1410px;" width="13" height="10" viewBox="0 0 13 10"><ellipse cx="6.5" cy="5" rx="5.5" ry="3.5" fill="none" stroke="#333" stroke-width="1.2"/><circle cx="6.5" cy="5" r="2" fill="#333"/><path d="M2 2L1 0M6.5 1V0M11 2L12 0" stroke="#333"/></svg>
<svg class="a" style="left:776px;top:1409px;" width="11" height="12" viewBox="0 0 11 12"><path d="M3 5V3A2.5 2.5 0 0 1 8 3" fill="none" stroke="#555" stroke-width="1.1"/><rect x="1.5" y="5" width="8" height="6" fill="#f0e080" stroke="#7a6a20" stroke-width="0.8"/></svg>
<div class="a" style="left:791.5px;top:1396px;width:133px;height:42px;background:#dcdad5;border:1px solid #9a9892;border-top-color:#fff;border-left-color:#fff;"></div>
<div class="t" style="left:798.5px;top:1407.49px;font-size:19.50px;color:#000;font-weight:700;transform:scaleX(1.1448);transform-origin:0 0;">•Layer 1</div>
<div class="a" style="left:893px;top:1402px;width:1px;height:30px;background:#a8a6a0;"></div>
<svg class="a" style="left:896px;top:1410px;" width="19" height="12" viewBox="0 0 19 12"><path d="M1 1H18L9.5 11Z" fill="#000"/></svg>
<div class="t" style="left:925.5px;top:1406.07px;font-size:20.00px;color:#000;font-weight:700;transform:scaleX(1.3210);transform-origin:0 0;">Ctrl</div>
<div class="t" style="left:971.0px;top:1406.07px;font-size:20.00px;color:#000;transform:scaleX(1.2617);transform-origin:0 0;">: snap angle</div>
<div class="a" style="left:1301.5px;top:1398px;width:1px;height:38px;background:#b8b6b0;"></div>
<div class="t" style="left:1305.0px;top:1398.19px;font-size:17.50px;color:#000;transform:scaleX(0.9677);transform-origin:0 0;">X:</div>
<div class="t" style="left:1345.0px;top:1398.19px;font-size:17.50px;color:#000;transform:scaleX(1.1417);transform-origin:0 0;">42.42</div>
<div class="t" style="left:1305.0px;top:1419.19px;font-size:17.50px;color:#000;transform:scaleX(0.8350);transform-origin:0 0;">Y:</div>
<div class="t" style="left:1336.0px;top:1419.19px;font-size:17.50px;color:#000;transform:scaleX(1.1023);transform-origin:0 0;">154.69</div>
<div class="t" style="left:1408.0px;top:1408.19px;font-size:17.50px;color:#000;transform:scaleX(1.0288);transform-origin:0 0;">Z:</div>
<div class="a" style="left:1428px;top:1404px;width:51px;height:27px;background:#fff;border:1px solid #7a7872;"></div>
<div class="a" style="left:1468px;top:1405px;width:10px;height:25px;background:#dcdad5;border-left:1px solid #b0aea8;"></div>
<svg class="a" style="left:1469px;top:1407px;" width="8" height="20" viewBox="0 0 8 20"><path d="M1 4H7L4 1Z" fill="#555"/><path d="M1 15H7L4 18Z" fill="#555"/></svg>
<div class="t" style="left:1437.0px;top:1407.34px;font-size:18.50px;color:#000;transform:scaleX(0.9719);transform-origin:0 0;">162</div>
<div class="a" style="left:1488px;top:312px;width:907px;height:3px;background:#cccccc;"></div>
<div class="a" style="left:1488px;top:315px;width:907px;height:1123px;background:#e8e8e8;"></div>
<div class="t" style="left:1496.0px;top:320.75px;font-size:22.50px;color:#848484;transform:scaleX(1.1308);transform-origin:0 0;">File</div>
<div class="t" style="left:1549.0px;top:320.75px;font-size:22.50px;color:#848484;transform:scaleX(1.0575);transform-origin:0 0;">Edit</div>
<div class="t" style="left:1606.0px;top:320.75px;font-size:22.50px;color:#848484;transform:scaleX(1.0958);transform-origin:0 0;">View</div>
<div class="t" style="left:1674.0px;top:320.75px;font-size:22.50px;color:#848484;transform:scaleX(1.1373);transform-origin:0 0;">Insert</div>
<div class="t" style="left:1753.0px;top:320.75px;font-size:22.50px;color:#848484;transform:scaleX(1.1086);transform-origin:0 0;">Format</div>
<div class="t" style="left:1847.0px;top:320.75px;font-size:22.50px;color:#848484;transform:scaleX(1.0471);transform-origin:0 0;">Tools</div>
<div class="t" style="left:1918.5px;top:320.75px;font-size:22.50px;color:#848484;transform:scaleX(1.1091);transform-origin:0 0;">Modify</div>
<div class="t" style="left:2008.0px;top:320.75px;font-size:22.50px;color:#848484;transform:scaleX(1.0746);transform-origin:0 0;">Window</div>
<div class="t" style="left:2110.5px;top:320.75px;font-size:22.50px;color:#848484;transform:scaleX(1.0697);transform-origin:0 0;">Help</div>
<div class="t" style="left:2375.0px;top:324.15px;font-size:14.00px;color:#888;transform:scaleX(1.2231);transform-origin:0 0;">×</div>
<div class="a" style="left:1488px;top:347px;width:874px;height:1px;background:#d2d2d2;"></div>
<svg class="a" style="left:1493.5px;top:357.8px;" width="7" height="7" viewBox="0 0 7 7"><circle cx="3.5" cy="3.5" r="2.6" fill="#a8a8a8"/></svg>
<svg class="a" style="left:1493.5px;top:365px;" width="7" height="7" viewBox="0 0 7 7"><circle cx="3.5" cy="3.5" r="2.6" fill="#a8a8a8"/></svg>
<svg class="a" style="left:1493.5px;top:372.5px;" width="7" height="7" viewBox="0 0 7 7"><circle cx="3.5" cy="3.5" r="2.6" fill="#a8a8a8"/></svg>
<svg class="a" style="left:1493.5px;top:380px;" width="7" height="7" viewBox="0 0 7 7"><circle cx="3.5" cy="3.5" r="2.6" fill="#a8a8a8"/></svg>
<svg class="a" style="left:1493.5px;top:387.6px;" width="7" height="7" viewBox="0 0 7 7"><circle cx="3.5" cy="3.5" r="2.6" fill="#a8a8a8"/></svg>
<svg class="a" style="left:1515px;top:356.5px;" width="34" height="40" viewBox="0 0 34 40"><path d="M1.5 1.5H24L32.5 10V38.5H1.5Z" fill="#fafafa" stroke="#b8952a" stroke-width="2.2"/><path d="M24 1H33V10Z" fill="#c8a020"/><circle cx="13" cy="24" r="7" fill="#ee9070"/><path d="M10 34L26 18V34Z" fill="#e8c020" stroke="#a08010" stroke-width="0.8"/></svg>
<svg class="a" style="left:1558.5px;top:374px;" width="10" height="6" viewBox="0 0 10 6"><path d="M0 0H10L5 5.5Z" fill="#000"/></svg>
<svg class="a" style="left:1574px;top:358px;" width="38" height="36" viewBox="0 0 38 36"><path d="M1.5 6V34H36V9H16L13 4H2Z" fill="#c8b08a" stroke="#8a7050" stroke-width="1.6"/><rect x="9" y="7" width="22" height="12" fill="#fff" stroke="#666" stroke-width="1.2"/><path d="M1.5 16H36V34H1.5Z" fill="#e2cba8" stroke="#8a7050" stroke-width="1.6"/></svg>
<svg class="a" style="left:1617.5px;top:374px;" width="10" height="6" viewBox="0 0 10 6"><path d="M0 0H10L5 5.5Z" fill="#000"/></svg>
<svg class="a" style="left:1633.5px;top:356.5px;" width="40" height="40" viewBox="0 0 40 40"><rect x="1.5" y="1.5" width="37" height="37" rx="2" fill="#6a2a8a" stroke="#3a1050" stroke-width="1.6"/><rect x="6" y="3" width="28" height="17" fill="#f2f2f2"/><rect x="10" y="27" width="18" height="11" fill="#d8d8d8"/><rect x="13" y="29" width="5" height="7" fill="#555"/><path d="M28 6L31 13L38 13L33 18L35 25L28 21L21 25L23 18L18 13L25 13Z" fill="#fff" stroke="#40d040" stroke-width="2"/></svg>
<svg class="a" style="left:1680.5px;top:374px;" width="10" height="6" viewBox="0 0 10 6"><path d="M0 0H10L5 5.5Z" fill="#000"/></svg>
<div class="a" style="left:1696px;top:356px;width:1px;height:42px;background:#d0d0d0;"></div>
<svg class="a" style="left:1706px;top:355px;" width="37" height="41" viewBox="0 0 37 41"><path d="M1.5 1.5H27L35.5 10V39.5H1.5Z" fill="#f2f2f2" stroke="#aaa" stroke-width="1.6"/><path d="M6 25H22" stroke="#e0a050" stroke-width="3"/><path d="M18 18L28 25L18 32Z" fill="#c08010"/></svg>
<svg class="a" style="left:1762px;top:358px;" width="34" height="38" viewBox="0 0 34 38"><rect x="1" y="1" width="32" height="36" fill="#f8f8f8" stroke="#888" stroke-width="1.4"/><path d="M26 2C22 12 24 26 28 36M26 2C18 10 10 18 2 23C10 25 16 30 18 36" fill="none" stroke="#d42020" stroke-width="3"/></svg>
<svg class="a" style="left:1811px;top:361px;" width="41" height="35" viewBox="0 0 41 35"><rect x="1" y="6" width="39" height="16" rx="3" fill="#5a5a5a" stroke="#222" stroke-width="1.4"/><rect x="8" y="1" width="25" height="8" fill="#666" stroke="#222"/><rect x="6" y="18" width="29" height="16" fill="#eaeaea" stroke="#222" stroke-width="1.4"/><path d="M10 22L28 30" stroke="#8c8" stroke-width="2"/><rect x="4" y="10" width="33" height="4" fill="#ddd"/></svg>
<div class="a" style="left:1862.5px;top:356px;width:1px;height:42px;background:#d0d0d0;"></div>
<svg class="a" style="left:1877px;top:357px;" width="33" height="38" viewBox="0 0 33 38"><path d="M4 1L20 28M28 1L12 28" stroke="#aaa" stroke-width="3"/><circle cx="8" cy="31" r="5.5" fill="none" stroke="#d42020" stroke-width="4"/><circle cx="25" cy="31" r="5.5" fill="none" stroke="#d42020" stroke-width="4"/></svg>
<svg class="a" style="left:1925px;top:358px;" width="39" height="37" viewBox="0 0 39 37"><rect x="1" y="1" width="24" height="26" fill="#f4f4f4" stroke="#999" stroke-width="1.4"/><rect x="14" y="10" width="24" height="26" fill="#f8f8f8" stroke="#999" stroke-width="1.4"/><path d="M5 8H19M5 13H19M18 18H33M18 23H33M18 28H33" stroke="#999" stroke-width="1.6"/></svg>
<svg class="a" style="left:1978.5px;top:356.5px;" width="40" height="40" viewBox="0 0 40 40"><rect x="1.5" y="6" width="31" height="32" rx="2" fill="#d8b880" stroke="#8a7040" stroke-width="1.6"/><rect x="9" y="1.5" width="16" height="8" rx="2" fill="#ddd" stroke="#777" stroke-width="1.4"/><rect x="15" y="17" width="23" height="22" fill="#fafafa" stroke="#888" stroke-width="1.4"/><path d="M19 23H34M19 28H34M19 33H34" stroke="#888" stroke-width="1.6"/></svg>
<svg class="a" style="left:2022.5px;top:374px;" width="10" height="6" viewBox="0 0 10 6"><path d="M0 0H10L5 5.5Z" fill="#000"/></svg>
<div class="a" style="left:2038px;top:356px;width:1px;height:42px;background:#d0d0d0;"></div>
<svg class="a" style="left:2048px;top:357px;" width="42" height="38" viewBox="0 0 42 38"><rect x="20" y="1" width="6" height="14" rx="2" fill="#b88040" stroke="#6a4a20"/><path d="M14 15H32L34 26H12Z" fill="#2a2a2a"/><path d="M12 26H34C34 32 30 36 22 37C14 38 6 37 1 36C6 34 10 31 12 26Z" fill="#d42020"/></svg>
<div class="a" style="left:2099px;top:356px;width:1px;height:42px;background:#d0d0d0;"></div>
<svg class="a" style="left:2106px;top:362px;" width="43" height="30" viewBox="0 0 43 30"><path d="M14 1L1 12L14 23V16C26 16 32 19 36 29C40 19 36 8 14 8Z" fill="#f4e040" stroke="#c0a010" stroke-width="1.6" stroke-linejoin="round"/></svg>
<svg class="a" style="left:2154px;top:374px;" width="10" height="6" viewBox="0 0 10 6"><path d="M0 0H10L5 5.5Z" fill="#000"/></svg>
<svg class="a" style="left:2170.5px;top:362px;" width="44" height="30" viewBox="0 0 44 30"><path d="M30 1L43 12L30 23V16C18 16 12 19 8 29C4 19 8 8 30 8Z" fill="#ececec" stroke="#d0d0d0" stroke-width="1.6" stroke-linejoin="round"/></svg>
<svg class="a" style="left:2217px;top:374px;" width="10" height="6" viewBox="0 0 10 6"><path d="M0 0H10L5 5.5Z" fill="#bbb"/></svg>
<div class="a" style="left:2232.5px;top:356px;width:1px;height:42px;background:#d0d0d0;"></div>
<svg class="a" style="left:2240px;top:356px;" width="43" height="43" viewBox="0 0 43 43"><circle cx="2.4" cy="2.0" r="1.5" fill="#555"/><circle cx="2.4" cy="11.3" r="1.5" fill="#555"/><circle cx="2.4" cy="20.6" r="1.5" fill="#555"/><circle cx="2.4" cy="29.9" r="1.5" fill="#555"/><circle cx="2.4" cy="39.2" r="1.5" fill="#555"/><circle cx="11.8" cy="2.0" r="1.5" fill="#555"/><circle cx="11.8" cy="11.3" r="1.5" fill="#555"/><circle cx="11.8" cy="20.6" r="1.5" fill="#555"/><circle cx="11.8" cy="29.9" r="1.5" fill="#555"/><circle cx="11.8" cy="39.2" r="1.5" fill="#555"/><circle cx="21.2" cy="2.0" r="1.5" fill="#555"/><circle cx="21.2" cy="11.3" r="1.5" fill="#555"/><circle cx="21.2" cy="20.6" r="1.5" fill="#555"/><circle cx="21.2" cy="29.9" r="1.5" fill="#555"/><circle cx="21.2" cy="39.2" r="1.5" fill="#555"/><circle cx="30.6" cy="2.0" r="1.5" fill="#555"/><circle cx="30.6" cy="11.3" r="1.5" fill="#555"/><circle cx="30.6" cy="20.6" r="1.5" fill="#555"/><circle cx="30.6" cy="29.9" r="1.5" fill="#555"/><circle cx="30.6" cy="39.2" r="1.5" fill="#555"/><circle cx="40.0" cy="2.0" r="1.5" fill="#555"/><circle cx="40.0" cy="11.3" r="1.5" fill="#555"/><circle cx="40.0" cy="20.6" r="1.5" fill="#555"/><circle cx="40.0" cy="29.9" r="1.5" fill="#555"/><circle cx="40.0" cy="39.2" r="1.5" fill="#555"/></svg>
<svg class="a" style="left:2291px;top:353px;" width="48" height="48" viewBox="0 0 48 48"><path d="M10 2V46M36 2V46M2 12H46M2 30H46" stroke="#4a7ab8" stroke-width="1.3" stroke-dasharray="1.6 2"/><rect x="10" y="12" width="26" height="18.5" fill="#fff" stroke="#555" stroke-width="2"/></svg>
<div class="t" style="left:2380.0px;top:366.38px;font-size:22.00px;color:#222;font-weight:700;transform:scaleX(1.2259);transform-origin:0 0;">»</div>
<svg class="a" style="left:1500px;top:412.5px;" width="6" height="6" viewBox="0 0 6 6"><circle cx="3" cy="3" r="2.4" fill="#a0a0a0"/></svg>
<svg class="a" style="left:1507.4px;top:412.5px;" width="6" height="6" viewBox="0 0 6 6"><circle cx="3" cy="3" r="2.4" fill="#a0a0a0"/></svg>
<svg class="a" style="left:1514.8px;top:412.5px;" width="6" height="6" viewBox="0 0 6 6"><circle cx="3" cy="3" r="2.4" fill="#a0a0a0"/></svg>
<svg class="a" style="left:1522.2px;top:412.5px;" width="6" height="6" viewBox="0 0 6 6"><circle cx="3" cy="3" r="2.4" fill="#a0a0a0"/></svg>
<svg class="a" style="left:1529.6px;top:412.5px;" width="6" height="6" viewBox="0 0 6 6"><circle cx="3" cy="3" r="2.4" fill="#a0a0a0"/></svg>
<svg class="a" style="left:1537px;top:412.5px;" width="6" height="6" viewBox="0 0 6 6"><circle cx="3" cy="3" r="2.4" fill="#a0a0a0"/></svg>
<div class="a" style="left:1495px;top:425.5px;width:52px;height:54px;background:#d8d8d8;border:1px solid #c4c4c4;border-radius:4px;"></div>
<svg class="a" style="left:1505px;top:435px;" width="30" height="38" viewBox="0 0 30 38"><path d="M3 2V30L10 24L16 36L21 34L15 22H25Z" fill="#f6f6f6" stroke="#555" stroke-width="2.2" stroke-linejoin="round"/></svg>
<div class="a" style="left:1504.5px;top:483.5px;width:32.5px;height:1px;background:#cdcdcd;"></div>
<div class="a" style="left:1504.5px;top:604px;width:32.5px;height:1px;background:#cdcdcd;"></div>
<div class="a" style="left:1504.5px;top:775px;width:32.5px;height:1px;background:#cdcdcd;"></div>
<div class="a" style="left:1504.5px;top:948px;width:32.5px;height:1px;background:#cdcdcd;"></div>
<svg class="a" style="left:1492px;top:498px;" width="46" height="40" viewBox="0 0 46 40"><path d="M4 8C12 3 20 12 28 7C34 4 38 6 42 8M4 14C12 9 20 18 28 13C34 10 38 12 42 14" fill="none" stroke="#5080c0" stroke-width="2.2"/><path d="M6 20H12M16 20H22M26 20H32M36 20H40" stroke="#5080c0" stroke-width="2"/><rect x="1" y="28" width="44" height="11" fill="#3a68b0"/></svg>
<svg class="a" style="left:1542px;top:512px;" width="10" height="6" viewBox="0 0 10 6"><path d="M0 0H10L5 5.5Z" fill="#000"/></svg>
<svg class="a" style="left:1490px;top:552px;" width="52" height="46" viewBox="0 0 52 46"><defs><linearGradient id="bk1" x1="0" y1="0" x2="1" y2="1"><stop offset="0" stop-color="#fafafa"/><stop offset="0.5" stop-color="#9a9a9a"/><stop offset="1" stop-color="#e0e0e0"/></linearGradient></defs><path d="M26 10C34 8 40 14 40 28" fill="none" stroke="#3a78c0" stroke-width="5"/><path d="M3 22L16 6L30 16L18 31Z" fill="url(#bk1)" stroke="#333" stroke-width="2" stroke-linejoin="round"/><path d="M14 6Q20 0 26 6L22 10Q18 6 16 9Z" fill="none" stroke="#333" stroke-width="1.8"/><rect x="1" y="29" width="48" height="12" fill="#6a98d8"/></svg>
<svg class="a" style="left:1542px;top:569px;" width="10" height="6" viewBox="0 0 10 6"><path d="M0 0H10L5 5.5Z" fill="#000"/></svg>
<svg class="a" style="left:1500px;top:614px;" width="40" height="40" viewBox="0 0 40 40"><path d="M4 37L37 4" stroke="#222" stroke-width="2.4"/></svg>
<svg class="a" style="left:1497px;top:673px;" width="48" height="44" viewBox="0 0 48 44"><defs><linearGradient id="rg1" x1="0" y1="0" x2="0" y2="1"><stop offset="0" stop-color="#9cc0ee"/><stop offset="1" stop-color="#5a88cc"/></linearGradient></defs><ellipse cx="23" cy="38" rx="21" ry="3.5" fill="#d4d4d4"/><rect x="3.5" y="4" width="40.5" height="26" fill="url(#rg1)" stroke="#2a5a9a" stroke-width="2"/></svg>
<svg class="a" style="left:1497px;top:727px;" width="48" height="40" viewBox="0 0 48 40"><defs><linearGradient id="rg2" x1="0" y1="0" x2="0" y2="1"><stop offset="0" stop-color="#9cc0ee"/><stop offset="1" stop-color="#5a88cc"/></linearGradient></defs><ellipse cx="23" cy="36" rx="21" ry="3" fill="#d4d4d4"/><ellipse cx="23.5" cy="17.5" rx="20" ry="14" fill="url(#rg2)" stroke="#2a5a9a" stroke-width="2"/></svg>
<svg class="a" style="left:1495px;top:799px;" width="40" height="15" viewBox="0 0 40 15"><path d="M1 7.5H28" stroke="#111" stroke-width="2.6"/><path d="M24 1L38 7.5L24 14Z" fill="#111"/></svg>
<svg class="a" style="left:1542px;top:803px;" width="10" height="6" viewBox="0 0 10 6"><path d="M0 0H10L5 5.5Z" fill="#000"/></svg>
<svg class="a" style="left:1492px;top:840px;" width="44" height="40" viewBox="0 0 44 40"><path d="M36 2L42 8L14 32L4 36L8 26Z" fill="#f0a040" stroke="#a06020" stroke-width="1.6"/><path d="M36 2L42 8L38 12L32 6Z" fill="#e03030"/><path d="M2 38C14 32 30 34 36 38" fill="none" stroke="#333" stroke-width="1.6"/></svg>
<svg class="a" style="left:1542px;top:858px;" width="10" height="6" viewBox="0 0 10 6"><path d="M0 0H10L5 5.5Z" fill="#000"/></svg>
<svg class="a" style="left:1494px;top:886px;" width="46" height="48" viewBox="0 0 46 48"><path d="M8 7H20V40H32" fill="none" stroke="#111" stroke-width="2.6"/><rect x="2" y="2" width="11" height="9" rx="3" fill="#fff" stroke="#111" stroke-width="2.4"/><rect x="30" y="36" width="11" height="9" rx="3" fill="#fff" stroke="#111" stroke-width="2.4"/></svg>
<svg class="a" style="left:1542px;top:913px;" width="10" height="6" viewBox="0 0 10 6"><path d="M0 0H10L5 5.5Z" fill="#000"/></svg>
<svg class="a" style="left:1493px;top:957px;" width="44" height="44" viewBox="0 0 44 44"><path d="M22 2L42 22L22 42L2 22Z" fill="#6a9ad8" stroke="#2a5a9a" stroke-width="2.4"/></svg>
<svg class="a" style="left:1542px;top:975px;" width="10" height="6" viewBox="0 0 10 6"><path d="M0 0H10L5 5.5Z" fill="#000"/></svg>
<svg class="a" style="left:1492px;top:1011px;" width="46" height="46" viewBox="0 0 46 46"><circle cx="22" cy="21" r="19.5" fill="#6a9ad8" stroke="#2a5a9a" stroke-width="2.4"/><circle cx="15" cy="15" r="2.4" fill="#2a5a9a"/><circle cx="29" cy="15" r="2.4" fill="#2a5a9a"/><path d="M11 25Q22 34 33 25" fill="none" stroke="#2a5a9a" stroke-width="2.4"/></svg>
<svg class="a" style="left:1542px;top:1030px;" width="10" height="6" viewBox="0 0 10 6"><path d="M0 0H10L5 5.5Z" fill="#000"/></svg>
<svg class="a" style="left:1492px;top:1073px;" width="46" height="32" viewBox="0 0 46 32"><path d="M2 14L14 2V9H30V2L42 14L30 26V19H14V26Z" fill="#6a9ad8" stroke="#2a5a9a" stroke-width="2.4" stroke-linejoin="round"/></svg>
<svg class="a" style="left:1542px;top:1085px;" width="10" height="6" viewBox="0 0 10 6"><path d="M0 0H10L5 5.5Z" fill="#000"/></svg>
<svg class="a" style="left:1493px;top:1121px;" width="46" height="44" viewBox="0 0 46 44"><rect x="2" y="2" width="40" height="39" fill="#6a9ad8" stroke="#2a5a9a" stroke-width="2.4"/><path d="M2 12H42M14 2V41" stroke="#2a5a9a" stroke-width="2.4"/></svg>
<svg class="a" style="left:1542px;top:1140px;" width="10" height="6" viewBox="0 0 10 6"><path d="M0 0H10L5 5.5Z" fill="#000"/></svg>
<svg class="a" style="left:1492px;top:1177px;" width="46" height="44" viewBox="0 0 46 44"><path d="M6 2H38A4 4 0 0 1 42 6V26A4 4 0 0 1 38 30H20L4 40L12 30H6A4 4 0 0 1 2 26V6A4 4 0 0 1 6 2Z" fill="#6a9ad8" stroke="#2a5a9a" stroke-width="2.4"/></svg>
<svg class="a" style="left:1542px;top:1195px;" width="10" height="6" viewBox="0 0 10 6"><path d="M0 0H10L5 5.5Z" fill="#000"/></svg>
<svg class="a" style="left:1493px;top:1231px;" width="44" height="44" viewBox="0 0 44 44"><path d="M22 2L27 16H42L30 25L34 40L22 31L10 40L14 25L2 16H17Z" fill="#6a9ad8" stroke="#2a5a9a" stroke-width="2.4" stroke-linejoin="round"/></svg>
<svg class="a" style="left:1542px;top:1250px;" width="10" height="6" viewBox="0 0 10 6"><path d="M0 0H10L5 5.5Z" fill="#000"/></svg>
<svg class="a" style="left:1496px;top:1288px;" width="40" height="38" viewBox="0 0 40 38"><path d="M4 8L8 2H32L36 8V34H4Z" fill="#5a7898" stroke="#111" stroke-width="2.6"/><path d="M4 8L8 2H32L36 8Z" fill="#8aa8c8"/></svg>
<svg class="a" style="left:1542px;top:1305px;" width="10" height="6" viewBox="0 0 10 6"><path d="M0 0H10L5 5.5Z" fill="#000"/></svg>
<svg class="a" style="left:1559px;top:411px;" width="28" height="27" viewBox="0 0 28 27"><path d="M4 1V25M1 4.5H26" stroke="#333" stroke-width="1.2"/></svg>
<div class="a" style="left:1588px;top:410.5px;width:74px;height:28.5px;background:#e4e4e4;border:1px solid #c8c8c8;border-left:none;border-radius:0 4px 4px 0;"></div>
<div class="a" style="left:1661.5px;top:410.5px;width:565.5px;height:28.5px;background:#fff;"></div>
<div class="a" style="left:2231px;top:410.5px;width:77px;height:28.5px;background:#e2e2e2;border:1px solid #c8c8c8;"></div>
<div class="a" style="left:2227px;top:410.5px;width:4px;height:28.5px;background:#e2e2e2;border-left:1px solid #999;border-right:1px solid #999;"></div>
<div class="a" style="left:1693px;top:410.5px;width:2.5px;height:28.5px;background:#fff;border-left:1px solid #999;border-right:1px solid #999;"></div>
<div class="t" style="left:1732.2px;top:419.23px;font-size:14.50px;color:#888;transform:scaleX(1.1160);transform-origin:0 0;">1</div>
<div class="t" style="left:1807.6px;top:419.23px;font-size:14.50px;color:#888;transform:scaleX(1.1160);transform-origin:0 0;">2</div>
<div class="t" style="left:1883.1px;top:419.23px;font-size:14.50px;color:#888;transform:scaleX(1.1160);transform-origin:0 0;">3</div>
<div class="t" style="left:1958.5px;top:419.23px;font-size:14.50px;color:#888;transform:scaleX(1.1160);transform-origin:0 0;">4</div>
<div class="t" style="left:2034.0px;top:419.23px;font-size:14.50px;color:#888;transform:scaleX(1.1160);transform-origin:0 0;">5</div>
<div class="t" style="left:2109.4px;top:419.23px;font-size:14.50px;color:#888;transform:scaleX(1.1160);transform-origin:0 0;">6</div>
<div class="t" style="left:2184.8px;top:419.23px;font-size:14.50px;color:#888;transform:scaleX(1.1160);transform-origin:0 0;">7</div>
<div class="t" style="left:2260.3px;top:419.23px;font-size:14.50px;color:#888;transform:scaleX(1.1160);transform-origin:0 0;">8</div>
<svg class="a" style="left:0;top:0" width="2395" height="450"><path d="M1595.2 420V428 M1604.6 420V428 M1614.0 420V428 M1623.5 417V431 M1632.9 420V428 M1642.3 420V428 M1651.8 420V428 M1670.6 420V428 M1680.1 420V428 M1689.5 420V428 M1698.9 417V431 M1708.4 420V428 M1717.8 420V428 M1727.2 420V428 M1736.7 436V439 M1736.7 411V414 M1746.1 420V428 M1755.5 420V428 M1764.9 420V428 M1774.4 417V431 M1783.8 420V428 M1793.2 420V428 M1802.7 420V428 M1812.1 436V439 M1812.1 411V414 M1821.5 420V428 M1831.0 420V428 M1840.4 420V428 M1849.8 417V431 M1859.3 420V428 M1868.7 420V428 M1878.1 420V428 M1887.6 436V439 M1887.6 411V414 M1897.0 420V428 M1906.4 420V428 M1915.8 420V428 M1925.3 417V431 M1934.7 420V428 M1944.1 420V428 M1953.6 420V428 M1963.0 436V439 M1963.0 411V414 M1972.4 420V428 M1981.9 420V428 M1991.3 420V428 M2000.7 417V431 M2010.2 420V428 M2019.6 420V428 M2029.0 420V428 M2038.5 436V439 M2038.5 411V414 M2047.9 420V428 M2057.3 420V428 M2066.7 420V428 M2076.2 417V431 M2085.6 420V428 M2095.0 420V428 M2104.5 420V428 M2113.9 436V439 M2113.9 411V414 M2123.3 420V428 M2132.8 420V428 M2142.2 420V428 M2151.6 417V431 M2161.1 420V428 M2170.5 420V428 M2179.9 420V428 M2189.3 436V439 M2189.3 411V414 M2198.8 420V428 M2208.2 420V428 M2217.6 420V428 M2227.1 417V431 M2236.5 420V428 M2245.9 420V428 M2255.4 420V428 M2264.8 436V439 M2264.8 411V414 M2274.2 420V428 M2283.7 420V428 M2293.1 420V428 M2302.5 417V431" stroke="#999" stroke-width="1.3"/></svg>
<div class="a" style="left:1558.5px;top:487.5px;width:28.5px;height:822.5px;background:#fff;"></div>
<div class="a" style="left:1558.5px;top:444px;width:28.5px;height:44px;background:#e4e4e4;border:1px solid #c8c8c8;border-top:none;border-radius:0 0 4px 4px;"></div>
<div class="a" style="left:1558.5px;top:1310px;width:28.5px;height:61px;background:#e2e2e2;border:1px solid #c8c8c8;border-bottom:none;"></div>
<div class="a" style="left:1558.5px;top:529px;width:28.5px;height:3px;background:#fff;border-top:1px solid #999;border-bottom:1px solid #999;"></div>
<div class="a" style="left:1559px;top:1249.5px;width:28px;height:2px;background:#c8c8c8;"></div>
<div class="t" style="left:1566.0px;top:568.0px;font-size:14.5px;color:#888;transform:rotate(-90deg);transform-origin:0 0;">1</div>
<div class="t" style="left:1566.0px;top:643.4px;font-size:14.5px;color:#888;transform:rotate(-90deg);transform-origin:0 0;">2</div>
<div class="t" style="left:1566.0px;top:718.9px;font-size:14.5px;color:#888;transform:rotate(-90deg);transform-origin:0 0;">3</div>
<div class="t" style="left:1566.0px;top:794.3px;font-size:14.5px;color:#888;transform:rotate(-90deg);transform-origin:0 0;">4</div>
<div class="t" style="left:1566.0px;top:869.8px;font-size:14.5px;color:#888;transform:rotate(-90deg);transform-origin:0 0;">5</div>
<div class="t" style="left:1566.0px;top:945.2px;font-size:14.5px;color:#888;transform:rotate(-90deg);transform-origin:0 0;">6</div>
<div class="t" style="left:1566.0px;top:1020.6px;font-size:14.5px;color:#888;transform:rotate(-90deg);transform-origin:0 0;">7</div>
<div class="t" style="left:1566.0px;top:1096.1px;font-size:14.5px;color:#888;transform:rotate(-90deg);transform-origin:0 0;">8</div>
<div class="t" style="left:1566.0px;top:1171.6px;font-size:14.5px;color:#888;transform:rotate(-90deg);transform-origin:0 0;">9</div>
<div class="t" style="left:1566.0px;top:1251.0px;font-size:14.5px;color:#888;transform:rotate(-90deg);transform-origin:0 0;">10</div>
<div class="t" style="left:1566.0px;top:1326.5px;font-size:14.5px;color:#888;transform:rotate(-90deg);transform-origin:0 0;">11</div>
<svg class="a" style="left:0;top:0" width="1600" height="1441"><path d="M1566 449.8H1580 M1569 459.2H1577 M1569 468.6H1577 M1569 478.1H1577 M1569 496.9H1577 M1569 506.4H1577 M1569 515.8H1577 M1566 525.2H1580 M1569 534.7H1577 M1569 544.1H1577 M1569 553.5H1577 M1559 563.0H1562M1584 563.0H1587 M1569 572.4H1577 M1569 581.8H1577 M1569 591.2H1577 M1566 600.7H1580 M1569 610.1H1577 M1569 619.5H1577 M1569 629.0H1577 M1559 638.4H1562M1584 638.4H1587 M1569 647.8H1577 M1569 657.3H1577 M1569 666.7H1577 M1566 676.1H1580 M1569 685.6H1577 M1569 695.0H1577 M1569 704.4H1577 M1559 713.9H1562M1584 713.9H1587 M1569 723.3H1577 M1569 732.7H1577 M1569 742.1H1577 M1566 751.6H1580 M1569 761.0H1577 M1569 770.4H1577 M1569 779.9H1577 M1559 789.3H1562M1584 789.3H1587 M1569 798.7H1577 M1569 808.2H1577 M1569 817.6H1577 M1566 827.0H1580 M1569 836.5H1577 M1569 845.9H1577 M1569 855.3H1577 M1559 864.8H1562M1584 864.8H1587 M1569 874.2H1577 M1569 883.6H1577 M1569 893.0H1577 M1566 902.5H1580 M1569 911.9H1577 M1569 921.3H1577 M1569 930.8H1577 M1559 940.2H1562M1584 940.2H1587 M1569 949.6H1577 M1569 959.1H1577 M1569 968.5H1577 M1566 977.9H1580 M1569 987.4H1577 M1569 996.8H1577 M1569 1006.2H1577 M1559 1015.6H1562M1584 1015.6H1587 M1569 1025.1H1577 M1569 1034.5H1577 M1569 1043.9H1577 M1566 1053.4H1580 M1569 1062.8H1577 M1569 1072.2H1577 M1569 1081.7H1577 M1559 1091.1H1562M1584 1091.1H1587 M1569 1100.5H1577 M1569 1110.0H1577 M1569 1119.4H1577 M1566 1128.8H1580 M1569 1138.3H1577 M1569 1147.7H1577 M1569 1157.1H1577 M1559 1166.6H1562M1584 1166.6H1587 M1569 1176.0H1577 M1569 1185.4H1577 M1569 1194.8H1577 M1566 1204.3H1580 M1569 1213.7H1577 M1569 1223.1H1577 M1569 1232.6H1577 M1559 1242.0H1562M1584 1242.0H1587 M1569 1251.4H1577 M1569 1260.9H1577 M1569 1270.3H1577 M1566 1279.7H1580 M1569 1289.2H1577 M1569 1298.6H1577 M1569 1308.0H1577 M1559 1317.5H1562M1584 1317.5H1587 M1569 1326.9H1577 M1569 1336.3H1577 M1569 1345.7H1577 M1566 1355.2H1580 M1569 1364.6H1577" stroke="#999" stroke-width="1.3"/></svg>
<div class="a" style="left:1588px;top:440px;width:720px;height:931px;background:#e8e8e8;"></div>
<div class="a" style="left:1631.5px;top:457.5px;width:624.5px;height:883.5px;background:#fff;box-shadow:0 0 0 3px #f2f2f2, 3px 5px 8px 3px rgba(0,0,0,0.38);border:1px solid #a0a0a0;"></div>
<div class="a" style="left:1661px;top:487px;width:565px;height:824px;border:1px solid #cfcfcf;"></div>
<svg class="a" style="left:0;top:0" width="2395" height="1441"><path d="M1760.8 530.2 C1773.4 530.3 1813.7 529.8 1836.5 531.0 C1859.3 532.2 1876.8 535.1 1897.9 537.4 C1919.0 539.7 1945.5 541.4 1962.9 544.7 C1980.4 548.0 1993.0 550.7 2002.6 557.3 C2012.2 563.9 2021.8 573.9 2020.6 584.4 C2019.4 594.9 2007.9 610.0 1995.3 620.5 C1982.7 631.0 1965.2 639.1 1944.8 647.5 C1924.3 655.9 1903.9 663.5 1872.6 671.0 C1841.3 678.5 1781.1 685.4 1757.1 692.6 C1733.0 699.8 1731.3 707.4 1728.3 714.3 C1725.3 721.2 1731.3 729.3 1739.1 734.1 C1746.9 738.9 1759.0 739.0 1775.2 743.2 C1791.4 747.4 1811.2 756.7 1836.5 759.4 C1861.8 762.1 1896.7 760.6 1926.8 759.4 C1956.9 758.2 1993.5 752.5 2017.0 752.2 C2040.5 751.9 2055.5 754.9 2067.5 757.6 C2079.5 760.3 2084.9 764.8 2089.2 768.4 C2093.5 772.0 2093.5 775.4 2093.5 779.3 C2093.5 783.2 2092.9 785.9 2089.2 791.9 C2085.5 797.9 2077.1 809.0 2071.1 815.3 C2065.1 821.6 2074.2 817.2 2053.1 829.8 C2032.0 842.4 1976.1 876.1 1944.8 891.1 C1913.5 906.1 1883.2 911.0 1865.4 920.0 C1847.7 929.0 1838.3 939.6 1838.3 945.3 C1838.3 951.0 1847.7 955.5 1865.4 954.3 C1883.2 953.1 1913.5 943.7 1944.8 938.0 C1976.1 932.3 2024.2 920.9 2053.1 920.0 C2082.0 919.1 2090.9 932.6 2118.0 932.6 C2145.1 932.6 2196.8 920.9 2215.5 920.0 C2234.2 919.1 2227.4 924.2 2230.0 927.2 C2232.6 930.2 2232.2 933.8 2231.0 938.0 C2229.8 942.2 2228.8 947.9 2222.7 952.5 C2216.6 957.1 2212.7 960.3 2194.7 965.4 C2176.7 970.5 2132.4 977.4 2114.8 983.0 C2097.2 988.6 2097.3 993.7 2089.3 999.0 C2081.3 1004.3 2082.4 1007.5 2067.0 1015.0 C2051.6 1022.5 2011.6 1034.1 1996.7 1043.7 C1981.8 1053.3 1979.2 1064.4 1977.6 1072.4 C1976.0 1080.4 1981.8 1087.2 1987.1 1091.5 C1992.4 1095.8 1991.9 1098.7 2009.5 1097.9 C2027.1 1097.1 2068.6 1089.6 2092.5 1086.8 C2116.4 1084.0 2144.6 1081.0 2153.1 1081.3 C2161.6 1081.6 2163.3 1081.9 2143.6 1088.4 C2123.9 1094.9 2074.4 1109.1 2035.0 1120.3 C1995.6 1131.5 1944.5 1142.1 1907.3 1155.4 C1870.0 1168.7 1833.3 1189.5 1811.5 1200.1 C1789.7 1210.7 1782.5 1215.0 1776.4 1219.2 C1770.3 1223.5 1767.9 1224.3 1774.8 1225.6 C1781.7 1226.9 1799.9 1225.3 1818.0 1227.2 C1836.1 1229.1 1873.8 1234.5 1883.4 1236.8 C1893.0 1239.1 1885.2 1240.2 1875.4 1241.0 C1865.6 1241.8 1848.2 1239.9 1824.3 1241.6 C1800.3 1243.3 1748.2 1251.2 1731.7 1251.2 C1715.2 1251.2 1724.1 1246.9 1725.4 1241.6 C1726.7 1236.3 1738.1 1226.1 1739.7 1219.2 C1741.3 1212.3 1740.5 1209.1 1734.9 1200.1 C1729.3 1191.1 1709.4 1175.7 1706.2 1165.0 C1703.0 1154.3 1714.7 1147.4 1715.8 1136.2 C1716.9 1125.0 1716.1 1112.4 1712.6 1098.0 C1709.1 1083.6 1697.1 1061.7 1695.0 1050.0 C1692.9 1038.3 1699.0 1031.4 1699.8 1027.7" fill="none" stroke="#555" stroke-width="1.4"/></svg>
<div class="a" style="left:1689.8px;top:526.2px;width:7px;height:8px;background:#8ee04a;border:1px solid #4a9a1a;border-right-width:2px;"></div>
<div class="a" style="left:1958.3px;top:526.2px;width:7px;height:8px;background:#8ee04a;border:1px solid #4a9a1a;border-right-width:2px;"></div>
<div class="a" style="left:2226.5px;top:526.2px;width:7px;height:8px;background:#8ee04a;border:1px solid #4a9a1a;border-right-width:2px;"></div>
<div class="a" style="left:1689.8px;top:886.4px;width:7px;height:8px;background:#8ee04a;border:1px solid #4a9a1a;border-right-width:2px;"></div>
<div class="a" style="left:2226.5px;top:886.4px;width:7px;height:8px;background:#8ee04a;border:1px solid #4a9a1a;border-right-width:2px;"></div>
<div class="a" style="left:1689.9px;top:1247.2px;width:7px;height:8px;background:#8ee04a;border:1px solid #4a9a1a;border-right-width:2px;"></div>
<div class="a" style="left:1958.1px;top:1247.2px;width:7px;height:8px;background:#8ee04a;border:1px solid #4a9a1a;border-right-width:2px;"></div>
<div class="a" style="left:2226.3px;top:1247.2px;width:7px;height:8px;background:#8ee04a;border:1px solid #4a9a1a;border-right-width:2px;"></div>
<div class="a" style="left:2309px;top:406px;width:11px;height:965px;background:#c2c4c4;"></div>
<div class="a" style="left:2311.5px;top:645px;width:6px;height:500px;background:#7d8181;border-radius:3px;"></div>
<div class="a" style="left:1555px;top:1371px;width:754px;height:11px;background:#c2c4c4;"></div>
<div class="a" style="left:1555px;top:1382px;width:764px;height:1px;background:#a8a8a8;"></div>
<div class="a" style="left:1793px;top:1374px;width:283px;height:6px;background:#7d8181;border-radius:3px;"></div>
<div class="a" style="left:1488px;top:1382px;width:833px;height:26px;background:#e8e8e8;"></div>
<svg class="a" style="left:1573px;top:1386px;" width="90" height="18" viewBox="0 0 90 18"><rect x="1" y="1" width="1" height="16" fill="#999"/><path d="M12 1V17L2.5 9Z" fill="#a8a8a8"/><path d="M37 1V17L27 9Z" fill="#a8a8a8"/><path d="M52 1V17L62 9Z" fill="#a8a8a8"/><path d="M77 1V17L87 9Z" fill="#a8a8a8"/><rect x="88" y="1" width="1" height="16" fill="#999"/></svg>
<div class="a" style="left:1692px;top:1382px;width:119px;height:26px;background:#fff;border-left:1px solid #c0c0c0;"></div>
<div class="t" style="left:1713.5px;top:1385.32px;font-size:19.00px;color:#333;font-weight:700;transform:scaleX(1.2283);transform-origin:0 0;">Layout</div>
<div class="a" style="left:1811px;top:1382px;width:139px;height:26px;background:#e8e8e8;border-left:1px solid #c0c0c0;border-top:1px solid #d0d0d0;"></div>
<div class="t" style="left:1838.7px;top:1385.32px;font-size:19.00px;color:#333;transform:scaleX(1.1632);transform-origin:0 0;">Controls</div>
<div class="a" style="left:1950px;top:1382px;width:180px;height:26px;background:#e8e8e8;border-left:1px solid #c0c0c0;border-right:1px solid #c0c0c0;border-top:1px solid #d0d0d0;"></div>
<div class="t" style="left:1983.0px;top:1385.32px;font-size:19.00px;color:#333;transform:scaleX(1.1786);transform-origin:0 0;">Dimensio...</div>
<div class="a" style="left:1555px;top:1382px;width:764px;height:1px;background:#a8a8a8;"></div>
<div class="a" style="left:2326px;top:406px;width:69px;height:1001px;background:#e8e8e8;"></div>
<div class="a" style="left:2319.5px;top:406px;width:6.5px;height:1001px;background:#f0f0f0;border-left:1px solid #aaa;border-right:1px solid #c0c0c0;"></div>
<div class="a" style="left:2326px;top:1406px;width:69px;height:1px;background:#c8c8c8;"></div>
<div class="a" style="left:2321px;top:875px;width:4px;height:67px;background:#b0b0b0;"></div>
<svg class="a" style="left:2351px;top:430px;" width="22" height="22" viewBox="0 0 22 22"><path d="M2 3H16M2 8H16M2 13H16" stroke="#2a3a6a" stroke-width="2"/><path d="M12 15H21L16.5 20Z" fill="#2a3a6a"/></svg>
<div class="a" style="left:2329px;top:476px;width:61px;height:60px;background:#e4e4e4;border:1px solid #c8c8c8;border-radius:4px;"></div>
<svg class="a" style="left:2336px;top:484px;" width="46" height="46" viewBox="0 0 46 46"><g transform="translate(23 23) rotate(43)"><path d="M-15 0H15" stroke="#8a8a8a" stroke-width="8.5" stroke-linecap="round"/><circle cx="-18" cy="0" r="8" fill="#8a8a8a"/><circle cx="18" cy="0" r="8" fill="#8a8a8a"/><path d="M-15 0H15" stroke="#fdfdfd" stroke-width="5.5"/><circle cx="-18" cy="0" r="6.3" fill="#fdfdfd"/><circle cx="18" cy="0" r="6.3" fill="#fdfdfd"/><path d="M-28 -3.2H-19V3.2H-28Z" fill="#e4e4e4"/><path d="M-26 -3.2H-19V3.2H-26" fill="none" stroke="#8a8a8a" stroke-width="1.6"/><path d="M28 -3.2H19V3.2H28Z" fill="#e4e4e4"/><path d="M26 -3.2H19V3.2H26" fill="none" stroke="#8a8a8a" stroke-width="1.6"/></g></svg>
<svg class="a" style="left:2337px;top:549px;" width="44" height="44" viewBox="0 0 44 44"><defs><linearGradient id="tg1" x1="0" x2="1"><stop offset="0" stop-color="#666"/><stop offset="0.5" stop-color="#222"/><stop offset="1" stop-color="#666"/></linearGradient></defs><path d="M6 2H40V10H36V6H27V32H18V6H10V10H6Z" fill="url(#tg1)"/><path d="M1 12V41H40Z" fill="#6cc040" stroke="#3a9a1a" stroke-width="1.4"/><path d="M6 24V36H18Z" fill="none" stroke="#a8e080" stroke-width="1.6"/></svg>
<svg class="a" style="left:2339px;top:609px;" width="43" height="38" viewBox="0 0 43 38"><defs><linearGradient id="sk1" x1="0" y1="0" x2="0" y2="1"><stop offset="0" stop-color="#5a88c8"/><stop offset="0.55" stop-color="#e8a040"/><stop offset="1" stop-color="#f0b040"/></linearGradient></defs><path d="M15 8L21 1L27 8" fill="none" stroke="#777" stroke-width="1.6"/><rect x="1.5" y="8" width="39" height="28" rx="3" fill="#c88a2a" stroke="#8a5a10" stroke-width="1.6"/><rect x="6" y="13" width="30" height="18" fill="url(#sk1)"/><path d="M25 31V19M25 23L20 17M25 22L31 16" stroke="#333" stroke-width="1.6"/><ellipse cx="14" cy="29" rx="5" ry="2" fill="#fff8c0"/></svg>
<svg class="a" style="left:2338px;top:671px;" width="44" height="44" viewBox="0 0 44 44"><circle cx="22" cy="22" r="20" fill="#f4f4f4" stroke="#a8a8a8" stroke-width="2.4"/><circle cx="22" cy="22" r="16" fill="#fff" stroke="#c8c8c8" stroke-width="1.2"/><path d="M11 9L24 21L20 24Z" fill="#e03040"/><path d="M32 35L20 24L24 21Z" fill="#5a7ab0"/></svg>
<div class="a" style="left:1488px;top:1408px;width:907px;height:1px;background:#c8c8c8;"></div>
<div class="t" style="left:1500.6px;top:1414.72px;font-size:19.00px;color:#333;transform:scaleX(1.2050);transform-origin:0 0;">Slide 1 of 1 (Layout)</div>
<div class="a" style="left:1711px;top:1411px;width:1px;height:26px;background:#555;"></div>
<div class="t" style="left:1722.6px;top:1414.72px;font-size:19.00px;color:#333;transform:scaleX(1.1985);transform-origin:0 0;">Freeform Line selected</div>
<div class="a" style="left:1961px;top:1411px;width:1px;height:26px;background:#555;"></div>
<div class="t" style="left:1972.8px;top:1414.72px;font-size:19.00px;color:#333;transform:scaleX(1.2076);transform-origin:0 0;">Default</div>
<div class="a" style="left:2051px;top:1411px;width:1px;height:26px;background:#555;"></div>
<svg class="a" style="left:2061px;top:1413px;" width="27" height="20" viewBox="0 0 27 20"><path d="M8 1V17M1 7H14" stroke="#22c" stroke-width="1.5"/><path d="M8 10H25V19H8" fill="none" stroke="#222" stroke-width="1.4" stroke-dasharray="2 1.5"/></svg>
<div class="t" style="left:2095.0px;top:1414.72px;font-size:19.00px;color:#333;transform:scaleX(1.2083);transform-origin:0 0;">0.44 / 0.57</div>
<div class="a" style="left:0px;top:1439px;width:2395px;height:2px;background:#1e2119;"></div>
</body></html>
